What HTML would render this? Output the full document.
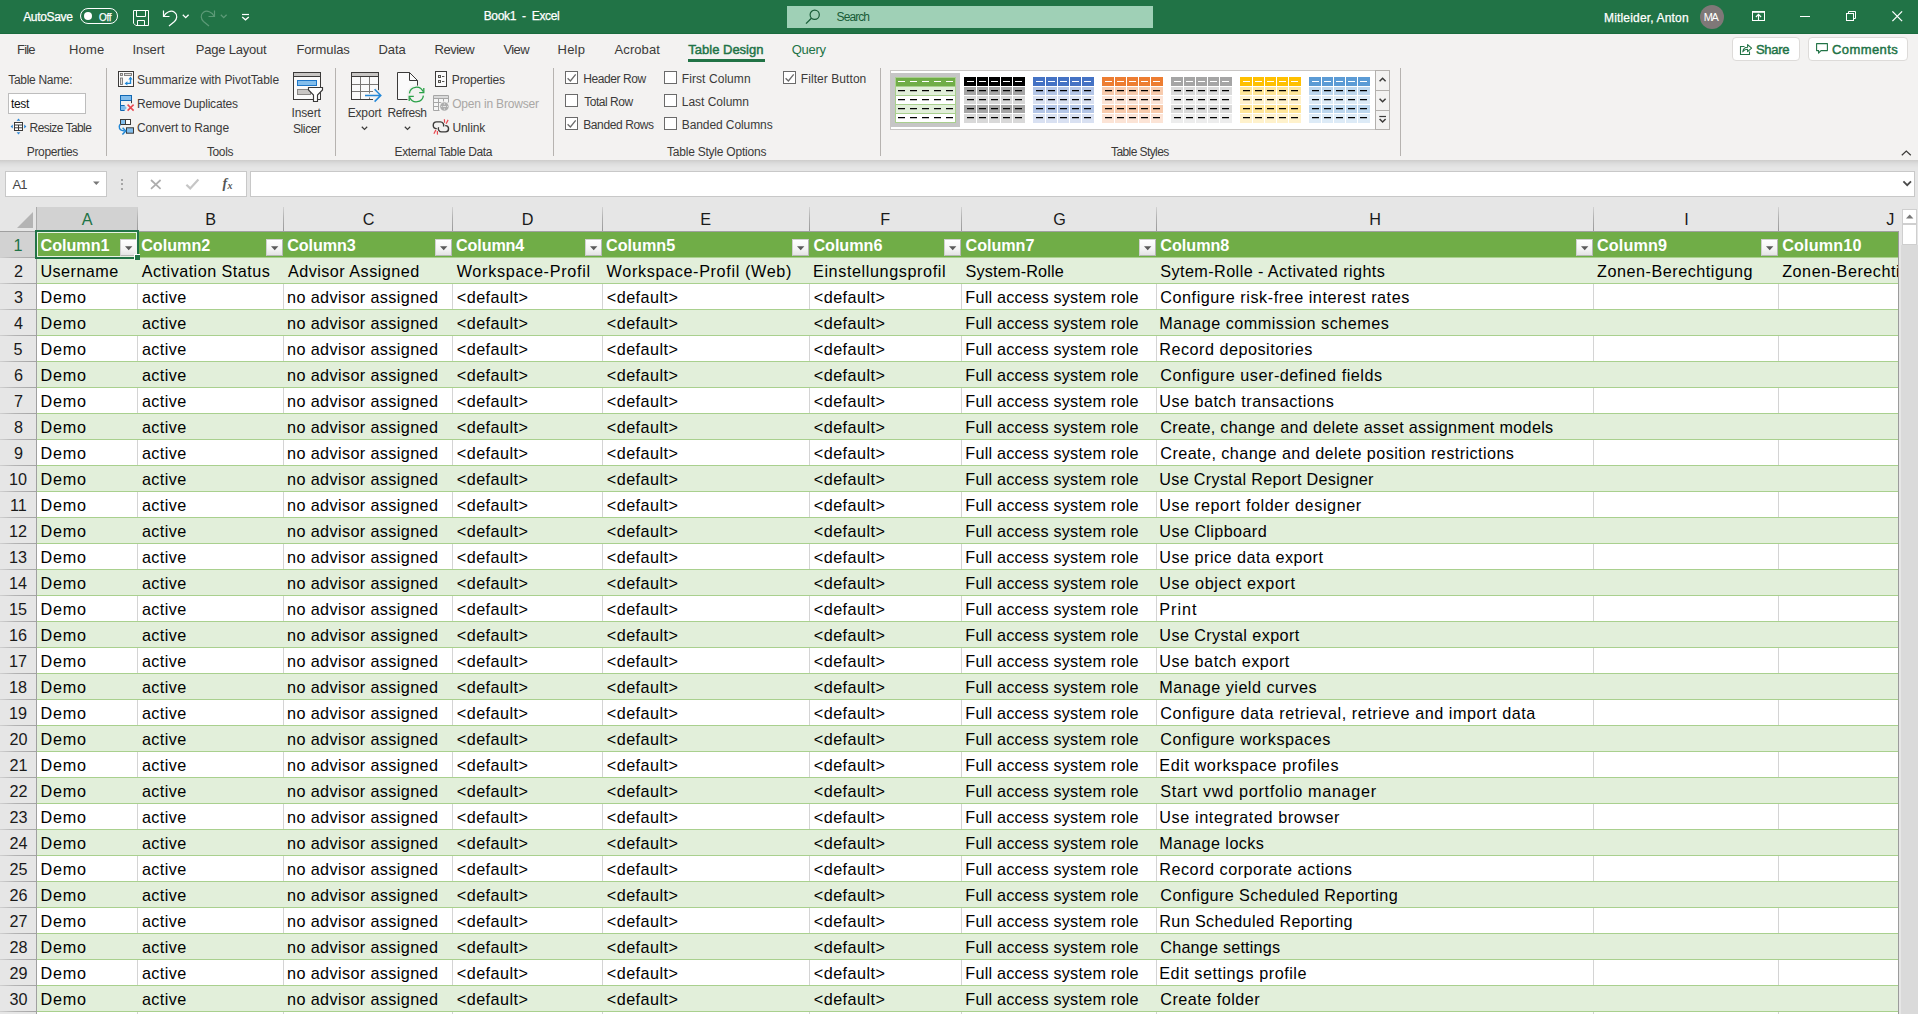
<!DOCTYPE html>
<html><head><meta charset="utf-8"><title>Book1 - Excel</title>
<style>
html,body{margin:0;padding:0;width:1918px;height:1014px;overflow:hidden;}
.root{position:absolute;left:0;top:0;width:1918px;height:1014px;overflow:hidden;}
body{width:1918px;height:1014px;overflow:hidden;background:#E6E6E6;position:relative;
font-family:"Liberation Sans", sans-serif;font-size:12px;color:#262626;}
.a{position:absolute;box-sizing:border-box;}
.t{position:absolute;white-space:nowrap;font-family:"Liberation Sans", sans-serif;}
svg{overflow:visible;}
</style></head>
<body>
<div class="root">
<div class="a" style="left:0px;top:0px;width:1918px;height:34px;background:#217346;"></div>
<div class="a" style="left:0px;top:33px;width:1918px;height:1px;background:#1A6B3E;"></div>
<div class="a" style="left:80px;top:8px;width:38px;height:16px;border:1px solid #fff;border-radius:8px;"></div>
<div class="a" style="left:84px;top:12px;width:8px;height:8px;background:#fff;border-radius:50%;"></div>
<svg class="a" style="left:133px;top:10px;" width="16" height="16" viewBox="0 0 16 16"><path d="M0.5 0.5 H15.5 V15.5 H2.8 L0.5 13.2 Z" fill="none" stroke="#fff" stroke-width="1"/><path d="M3.5 0.5 V6.5 H12.5 V0.5" fill="none" stroke="#fff" stroke-width="1"/><path d="M4.5 15.5 V10.5 H11.5 V15.5" fill="none" stroke="#fff" stroke-width="1"/></svg>
<svg class="a" style="left:162px;top:9px;" width="18" height="18" viewBox="0 0 18 18"><path d="M1.5 1.5 V7.5 H7.5" fill="none" stroke="#fff" stroke-width="1.2"/><path d="M1.8 7.2 C4 3 9 0.8 12.5 3.2 C16 5.8 15 10 12.5 12.5 L7 17" fill="none" stroke="#fff" stroke-width="1.2"/></svg>
<svg class="a" style="left:182px;top:14px;" width="8" height="5" viewBox="0 0 8 5"><path d="M0.8 0.8 L3.7 3.6 L6.6 0.8" fill="none" stroke="#fff" stroke-width="1.3"/></svg>
<svg class="a" style="left:200px;top:9px;" width="18" height="18" viewBox="0 0 18 18"><path d="M14.5 1.5 V7.5 H8.5" fill="none" stroke="#5C9A77" stroke-width="1.2"/><path d="M14.2 7.2 C12 3 7 0.8 3.5 3.2 C0 5.8 1 10 3.5 12.5 L9 17" fill="none" stroke="#5C9A77" stroke-width="1.2"/></svg>
<svg class="a" style="left:220px;top:14px;" width="8" height="5" viewBox="0 0 8 5"><path d="M0.8 0.8 L3.7 3.6 L6.6 0.8" fill="none" stroke="#5C9A77" stroke-width="1.3"/></svg>
<svg class="a" style="left:241px;top:13px;" width="9" height="8" viewBox="0 0 9 8"><path d="M1 1.5 H8" stroke="#fff" stroke-width="1.2"/><path d="M1.2 4 L4.5 6.8 L7.8 4" fill="none" stroke="#fff" stroke-width="1.3"/></svg>
<div class="a" style="left:787px;top:6px;width:366px;height:22px;background:#9FD0B6;"></div>
<svg class="a" style="left:805px;top:9px;" width="16" height="16" viewBox="0 0 16 16"><circle cx="9.7" cy="5.8" r="4.6" fill="none" stroke="#185C37" stroke-width="1.2"/><path d="M6.4 9.2 L1 14.6" stroke="#185C37" stroke-width="1.3"/></svg>
<div class="a" style="left:1700px;top:5px;width:24px;height:24px;background:#7F7878;border-radius:50%;"></div>
<svg class="a" style="left:1752px;top:11px;" width="15" height="12" viewBox="0 0 15 12"><rect x="0.5" y="0.5" width="12" height="9" fill="none" stroke="#fff" stroke-width="1"/><path d="M0.5 1.3 H12.5" stroke="#fff" stroke-width="1"/><path d="M6.5 9.5 V3.6 M3.9 6 L6.5 3.4 L9.1 6" fill="none" stroke="#fff" stroke-width="1.1"/></svg>
<div class="a" style="left:1800px;top:16px;width:10px;height:1px;background:#fff;"></div>
<svg class="a" style="left:1846px;top:10px;" width="12" height="12" viewBox="0 0 12 12"><rect x="0.5" y="3.5" width="7" height="7" fill="none" stroke="#fff" stroke-width="1"/><path d="M2.5 3.5 V1.5 H9.5 V8.5 H7.5" fill="none" stroke="#fff" stroke-width="1"/></svg>
<svg class="a" style="left:1892px;top:10.6px;" width="11" height="11" viewBox="0 0 11 11"><path d="M0.4 0.4 L10.1 10.1 M10.1 0.4 L0.4 10.1" stroke="#fff" stroke-width="1.3"/></svg>
<div class="a" style="left:0px;top:34px;width:1918px;height:126px;background:#F3F2F1;"></div>
<div class="a" style="left:0;top:160px;width:1918px;height:8px;background:linear-gradient(#CDCCCB,#D6D6D6 25%,#DEDEDE 50%,#E6E6E6);"></div>
<div class="a" style="left:688px;top:59px;width:77px;height:3px;background:#217346;"></div>
<div class="a" style="left:1732px;top:37px;width:68px;height:24px;background:#fff;border:1px solid #DDDBD9;border-radius:4px;"></div>
<div class="a" style="left:1808px;top:37px;width:100px;height:24px;background:#fff;border:1px solid #DDDBD9;border-radius:4px;"></div>
<svg class="a" style="left:1739px;top:43px;" width="14" height="13" viewBox="0 0 14 13"><path d="M5.5 3.5 H1.5 V11.5 H10.5 V8.5" fill="none" stroke="#217346" stroke-width="1.1"/><path d="M3.8 8.8 C4.2 5.6 6.2 4.2 8.6 4.2 V1.6 L12.6 5.2 L8.6 8.6 V6.2 C6.6 6.2 5 6.8 3.8 8.8 Z" fill="none" stroke="#217346" stroke-width="1.1" stroke-linejoin="round"/></svg>
<svg class="a" style="left:1816px;top:43px;" width="13" height="12" viewBox="0 0 13 12"><path d="M0.6 0.6 H11.4 V7.6 H5 L2.6 10.2 V7.6 H0.6 Z" fill="none" stroke="#217346" stroke-width="1.1" stroke-linejoin="round"/></svg>
<svg class="a" style="left:1901px;top:150px;" width="11" height="6" viewBox="0 0 11 6"><path d="M0.8 5.2 L5.3 1 L9.8 5.2" fill="none" stroke="#3B3A39" stroke-width="1.2"/></svg>
<div class="a" style="left:106px;top:68px;width:1px;height:88px;background:#B6B3B0;"></div>
<div class="a" style="left:335px;top:68px;width:1px;height:88px;background:#B6B3B0;"></div>
<div class="a" style="left:553px;top:68px;width:1px;height:88px;background:#B6B3B0;"></div>
<div class="a" style="left:880px;top:68px;width:1px;height:88px;background:#B6B3B0;"></div>
<div class="a" style="left:1400px;top:68px;width:1px;height:88px;background:#B6B3B0;"></div>
<div class="a" style="left:8px;top:93px;width:78px;height:21px;background:#fff;border:1px solid #BDBDBD;"></div>
<svg class="a" style="left:10px;top:118px;" width="17" height="17" viewBox="0 0 17 17"><rect x="4.5" y="4.5" width="8" height="8" fill="#fff" stroke="#3B3A39" stroke-width="1"/><path d="M4.5 7 H12.5 M4.5 9.8 H12.5 M8.5 7 V12.5" stroke="#3B3A39" stroke-width="1" fill="none"/><path d="M8.5 0.6 L10.4 2.8 H6.6 Z M8.5 16.4 L10.4 14.2 H6.6 Z M0.6 8.5 L2.8 6.6 V10.4 Z M16.4 8.5 L14.2 6.6 V10.4 Z" fill="#2B88D8"/></svg>
<svg class="a" style="left:118px;top:71px;" width="16" height="16" viewBox="0 0 16 16"><rect x="0.5" y="0.5" width="15" height="15" fill="#FAFAFA" stroke="#3B3A39" stroke-width="1"/><rect x="2.5" y="2.5" width="2" height="2" fill="#E1DFDD" stroke="#797775" stroke-width="0.9"/><rect x="6.5" y="2.5" width="7" height="2" fill="#E1DFDD" stroke="#797775" stroke-width="0.9"/><rect x="2.5" y="7" width="2" height="6.5" fill="#E1DFDD" stroke="#797775" stroke-width="0.9"/><path d="M12.5 8 V12.4 H8.8" fill="none" stroke="#1F87D6" stroke-width="1.4"/><path d="M12.5 5.6 L14.6 8.4 H10.4 Z M6.6 12.4 L9.4 10.3 V14.5 Z" fill="#1F87D6"/></svg>
<svg class="a" style="left:119px;top:95px;" width="16" height="17" viewBox="0 0 16 17"><rect x="1.5" y="0.5" width="11" height="5" fill="#83BEEC" stroke="#1268B3" stroke-width="1"/><path d="M12.5 5.5 V8.2" stroke="#3B3A39" stroke-width="1" fill="none"/><path d="M2 10.5 H5.6 L7.8 12.9 L5.6 15.3 H2 Z" fill="#83BEEC" stroke="none"/><path d="M1.5 5.5 V15.5 H5.6 M1.5 10.5 H5.6" stroke="#1268B3" stroke-width="1" fill="none"/><path d="M8.6 9.6 L14.6 15.6 M14.6 9.6 L8.6 15.6" stroke="#E8484F" stroke-width="1.5" fill="none"/></svg>
<svg class="a" style="left:118px;top:119px;" width="17" height="17" viewBox="0 0 17 17"><rect x="2.5" y="0.5" width="5" height="5" fill="#83BEEC" stroke="#3B3A39" stroke-width="1"/><rect x="7.5" y="0.5" width="5" height="5" fill="#fff" stroke="#3B3A39" stroke-width="1"/><rect x="8.5" y="8.8" width="7" height="5.4" fill="#83BEEC" stroke="#3B3A39" stroke-width="1"/><path d="M2.2 5.2 C0 8 1.2 11.6 6.6 12" fill="none" stroke="#1F87D6" stroke-width="1.5"/><path d="M4.6 8.8 L7.8 12 L4.4 15.6" fill="none" stroke="#1F87D6" stroke-width="1.5"/></svg>
<svg class="a" style="left:284px;top:66px;" width="44" height="40" viewBox="0 0 44 40"><rect x="9" y="6" width="28" height="27.5" fill="#FAFAFA"/><rect x="9" y="6.5" width="28" height="3.5" fill="#C8C6C4"/><path d="M9.5 10.5 H36.5" stroke="#3B3A39" stroke-width="1"/><rect x="9.5" y="6.5" width="27" height="27" fill="none" stroke="#3B3A39" stroke-width="1"/><rect x="13.5" y="14.5" width="19" height="5" fill="#83BEEC" stroke="#1E77C8" stroke-width="1"/><rect x="13.5" y="23.5" width="13" height="5" fill="#C8C6C4" stroke="#8A8886" stroke-width="1"/><path d="M24.5 21.5 H38.5 V24 L33.5 29 V35.5 H29.5 V29 L24.5 24 Z" fill="#fff" stroke="#3B3A39" stroke-width="1.15" stroke-linejoin="miter"/></svg>
<svg class="a" style="left:344px;top:68px;" width="40" height="36" viewBox="0 0 40 36"><rect x="8" y="5" width="26" height="26.5" fill="#FAFAFA"/><rect x="8" y="5" width="26" height="3" fill="#C8C6C4"/><path d="M16.5 8.5 V31.5 M25.5 8.5 V31.5 M7.5 16.5 H34.5 M7.5 23.5 H34.5" stroke="#7A7876" stroke-width="1" fill="none"/><path d="M7.5 8.5 H34.5" stroke="#3B3A39" stroke-width="1"/><rect x="7.5" y="4.5" width="27" height="27" fill="none" stroke="#3B3A39" stroke-width="1"/><rect x="29" y="22.4" width="8" height="10.5" fill="#F3F2F1"/><path d="M21 27.4 H36 M30.6 21.2 L36.8 27.4 L30.6 33.6" fill="none" stroke="#F3F2F1" stroke-width="4"/><path d="M21 27.4 H36.4 M30.6 21.2 L36.8 27.4 L30.6 33.6" fill="none" stroke="#2488D8" stroke-width="1.5"/></svg>
<svg class="a" style="left:361px;top:126px;" width="8" height="5" viewBox="0 0 8 5"><path d="M0.8 0.8 L3.5 3.4 L6.2 0.8" fill="none" stroke="#3B3A39" stroke-width="1.2"/></svg>
<svg class="a" style="left:344px;top:68px;" width="84" height="36" viewBox="0 0 84 36"><path d="M53.5 31.5 V4.5 H65.5 L73.5 12.5 V31.5 Z" fill="#FAFAFA" stroke="none"/><circle cx="72.4" cy="26.5" r="9.6" fill="#F3F2F1"/><path d="M63.5 31.5 H53.5 V4.5 H65.5 L73.5 12.5 V17.6" fill="none" stroke="#3B3A39" stroke-width="1"/><path d="M65.5 4.5 V12.5 H73.5" fill="none" stroke="#3B3A39" stroke-width="1"/><path d="M65.4 25.4 A7.1 7.1 0 0 1 79.0 23.6" fill="none" stroke="#2AA148" stroke-width="1.3"/><path d="M79.4 27.6 A7.1 7.1 0 0 1 65.8 29.4" fill="none" stroke="#2AA148" stroke-width="1.3"/><path d="M79.8 20 V24.7 H75.2" fill="none" stroke="#2AA148" stroke-width="1.3"/><path d="M65.2 33 V28.3 H69.8" fill="none" stroke="#2AA148" stroke-width="1.3"/></svg>
<svg class="a" style="left:404px;top:126px;" width="8" height="5" viewBox="0 0 8 5"><path d="M0.8 0.8 L3.5 3.4 L6.2 0.8" fill="none" stroke="#3B3A39" stroke-width="1.2"/></svg>
<svg class="a" style="left:434px;top:71px;" width="14" height="17" viewBox="0 0 14 17"><rect x="1.5" y="0.5" width="11" height="15" fill="#FAFAFA" stroke="#3B3A39" stroke-width="1"/><rect x="4.5" y="4.5" width="2" height="2" fill="#E8E8E8" stroke="#55534F" stroke-width="1"/><rect x="4.5" y="9.5" width="2" height="2" fill="#E8E8E8" stroke="#55534F" stroke-width="1"/><path d="M8 5.5 H10.4 M8 10.5 H10.4" stroke="#55534F" stroke-width="1"/></svg>
<svg class="a" style="left:430px;top:92px;" width="22" height="22" viewBox="0 0 22 22"><rect x="3.5" y="3.5" width="15" height="15" fill="#F6F6F6" stroke="none"/><path d="M18.5 10 V3.5 H3.5 V18.5 H9.5" fill="none" stroke="#A6A6A6" stroke-width="1"/><rect x="4" y="4" width="14" height="2.4" fill="#DADADA"/><path d="M3.5 6.5 H18.5 M3.5 10.5 H18.5 M3.5 14.5 H12 M8.5 6.5 V18.5 M13.5 6.5 V10.5" stroke="#A6A6A6" stroke-width="1" fill="none"/><circle cx="14.4" cy="14.5" r="5.3" fill="#F3F2F1"/><circle cx="14.4" cy="14.5" r="4.3" fill="#ADADAD"/><path d="M12.8 14.5 H16 M11 14.5 H11.8 M17 14.5 H17.8 M14.4 11.4 V12.6 M14.4 16.4 V17.6" stroke="#EDEDED" stroke-width="0.9"/></svg>
<svg class="a" style="left:430px;top:92px;" width="22" height="46" viewBox="0 0 22 46"><path d="M6.8 36.6 H6.6 A3.35 3.35 0 0 1 6.6 29.9 H10.4 A3.3 3.3 0 0 1 13.5 34.4" fill="none" stroke="#3B3A39" stroke-width="1.4"/><path d="M15.2 33.6 H15.4 A3.15 3.15 0 0 1 15.4 39.9 H11.6 A3.3 3.3 0 0 1 8.6 35.2" fill="none" stroke="#3B3A39" stroke-width="1.4"/><path d="M14.4 27.2 L14.6 30.8 M18.1 27.9 L16.1 31.7 M5.9 37.9 L3.9 41.7 M7.3 39 L7.5 42.6" stroke="#E8484F" stroke-width="1.2"/></svg>
<div class="a" style="left:565px;top:71px;width:13px;height:13px;background:#fff;border:1px solid #6A6A6A;"></div>
<svg class="a" style="left:565px;top:71px;" width="13" height="13" viewBox="0 0 13 13"><path d="M2.6 7.3 L5.4 10 L10.7 3.3" fill="none" stroke="#6A6A6A" stroke-width="1.3"/></svg>
<div class="a" style="left:565px;top:94px;width:13px;height:13px;background:#fff;border:1px solid #6A6A6A;"></div>
<div class="a" style="left:565px;top:117px;width:13px;height:13px;background:#fff;border:1px solid #6A6A6A;"></div>
<svg class="a" style="left:565px;top:117px;" width="13" height="13" viewBox="0 0 13 13"><path d="M2.6 7.3 L5.4 10 L10.7 3.3" fill="none" stroke="#6A6A6A" stroke-width="1.3"/></svg>
<div class="a" style="left:664px;top:71px;width:13px;height:13px;background:#fff;border:1px solid #6A6A6A;"></div>
<div class="a" style="left:664px;top:94px;width:13px;height:13px;background:#fff;border:1px solid #6A6A6A;"></div>
<div class="a" style="left:664px;top:117px;width:13px;height:13px;background:#fff;border:1px solid #6A6A6A;"></div>
<div class="a" style="left:783px;top:71px;width:13px;height:13px;background:#fff;border:1px solid #6A6A6A;"></div>
<svg class="a" style="left:783px;top:71px;" width="13" height="13" viewBox="0 0 13 13"><path d="M2.6 7.3 L5.4 10 L10.7 3.3" fill="none" stroke="#6A6A6A" stroke-width="1.3"/></svg>
<div class="a" style="left:890px;top:70px;width:500px;height:60px;background:#fff;border:1px solid #C8C6C4;"></div>
<div class="a" style="left:891px;top:73px;width:69px;height:54px;background:#C6C6C6;"></div>
<svg class="a" style="left:895px;top:77px;shape-rendering:crispEdges;" width="61" height="46" viewBox="0 0 61 46"><rect x="0" y="0" width="61" height="46" fill="#fff"/><rect x="0" y="0" width="61" height="9" fill="#70AD47"/><rect x="0" y="10" width="61" height="8" fill="#E2EFDA"/><rect x="0" y="19" width="61" height="8" fill="#FFFFFF"/><rect x="0" y="28" width="61" height="8" fill="#E2EFDA"/><rect x="0" y="37" width="61" height="9" fill="#FFFFFF"/><rect x="0" y="9" width="61" height="1" fill="#A9D08E"/><rect x="0" y="18" width="61" height="1" fill="#A9D08E"/><rect x="0" y="27" width="61" height="1" fill="#A9D08E"/><rect x="0" y="36" width="61" height="1" fill="#A9D08E"/><rect x="0" y="0" width="61" height="9" fill="#70AD47"/><rect x="0.5" y="0.5" width="60" height="45" fill="none" stroke="#A9D08E" stroke-width="1"/><rect x="3" y="4" width="7" height="1" fill="#fff"/><rect x="15" y="4" width="7" height="1" fill="#fff"/><rect x="27" y="4" width="7" height="1" fill="#fff"/><rect x="39" y="4" width="7" height="1" fill="#fff"/><rect x="51" y="4" width="7" height="1" fill="#fff"/><rect x="3" y="13" width="7" height="1" fill="#000"/><rect x="3" y="14" width="7" height="1" fill="#000" opacity="0.25"/><rect x="15" y="13" width="7" height="1" fill="#000"/><rect x="15" y="14" width="7" height="1" fill="#000" opacity="0.25"/><rect x="27" y="13" width="7" height="1" fill="#000"/><rect x="27" y="14" width="7" height="1" fill="#000" opacity="0.25"/><rect x="39" y="13" width="7" height="1" fill="#000"/><rect x="39" y="14" width="7" height="1" fill="#000" opacity="0.25"/><rect x="51" y="13" width="7" height="1" fill="#000"/><rect x="51" y="14" width="7" height="1" fill="#000" opacity="0.25"/><rect x="3" y="22" width="7" height="1" fill="#000"/><rect x="3" y="23" width="7" height="1" fill="#000" opacity="0.25"/><rect x="15" y="22" width="7" height="1" fill="#000"/><rect x="15" y="23" width="7" height="1" fill="#000" opacity="0.25"/><rect x="27" y="22" width="7" height="1" fill="#000"/><rect x="27" y="23" width="7" height="1" fill="#000" opacity="0.25"/><rect x="39" y="22" width="7" height="1" fill="#000"/><rect x="39" y="23" width="7" height="1" fill="#000" opacity="0.25"/><rect x="51" y="22" width="7" height="1" fill="#000"/><rect x="51" y="23" width="7" height="1" fill="#000" opacity="0.25"/><rect x="3" y="31" width="7" height="1" fill="#000"/><rect x="3" y="32" width="7" height="1" fill="#000" opacity="0.25"/><rect x="15" y="31" width="7" height="1" fill="#000"/><rect x="15" y="32" width="7" height="1" fill="#000" opacity="0.25"/><rect x="27" y="31" width="7" height="1" fill="#000"/><rect x="27" y="32" width="7" height="1" fill="#000" opacity="0.25"/><rect x="39" y="31" width="7" height="1" fill="#000"/><rect x="39" y="32" width="7" height="1" fill="#000" opacity="0.25"/><rect x="51" y="31" width="7" height="1" fill="#000"/><rect x="51" y="32" width="7" height="1" fill="#000" opacity="0.25"/><rect x="3" y="40" width="7" height="1" fill="#000"/><rect x="3" y="41" width="7" height="1" fill="#000" opacity="0.25"/><rect x="15" y="40" width="7" height="1" fill="#000"/><rect x="15" y="41" width="7" height="1" fill="#000" opacity="0.25"/><rect x="27" y="40" width="7" height="1" fill="#000"/><rect x="27" y="41" width="7" height="1" fill="#000" opacity="0.25"/><rect x="39" y="40" width="7" height="1" fill="#000"/><rect x="39" y="41" width="7" height="1" fill="#000" opacity="0.25"/><rect x="51" y="40" width="7" height="1" fill="#000"/><rect x="51" y="41" width="7" height="1" fill="#000" opacity="0.25"/></svg>
<svg class="a" style="left:964px;top:77px;shape-rendering:crispEdges;" width="61" height="46" viewBox="0 0 61 46"><rect x="0" y="0" width="12" height="9" fill="#000000"/><rect x="13" y="0" width="11" height="9" fill="#000000"/><rect x="25" y="0" width="11" height="9" fill="#000000"/><rect x="37" y="0" width="11" height="9" fill="#000000"/><rect x="49" y="0" width="12" height="9" fill="#000000"/><rect x="0" y="10" width="12" height="8" fill="#A6A6A6"/><rect x="13" y="10" width="11" height="8" fill="#A6A6A6"/><rect x="25" y="10" width="11" height="8" fill="#A6A6A6"/><rect x="37" y="10" width="11" height="8" fill="#A6A6A6"/><rect x="49" y="10" width="12" height="8" fill="#A6A6A6"/><rect x="0" y="19" width="12" height="8" fill="#D9D9D9"/><rect x="13" y="19" width="11" height="8" fill="#D9D9D9"/><rect x="25" y="19" width="11" height="8" fill="#D9D9D9"/><rect x="37" y="19" width="11" height="8" fill="#D9D9D9"/><rect x="49" y="19" width="12" height="8" fill="#D9D9D9"/><rect x="0" y="28" width="12" height="8" fill="#A6A6A6"/><rect x="13" y="28" width="11" height="8" fill="#A6A6A6"/><rect x="25" y="28" width="11" height="8" fill="#A6A6A6"/><rect x="37" y="28" width="11" height="8" fill="#A6A6A6"/><rect x="49" y="28" width="12" height="8" fill="#A6A6A6"/><rect x="0" y="37" width="12" height="9" fill="#D9D9D9"/><rect x="13" y="37" width="11" height="9" fill="#D9D9D9"/><rect x="25" y="37" width="11" height="9" fill="#D9D9D9"/><rect x="37" y="37" width="11" height="9" fill="#D9D9D9"/><rect x="49" y="37" width="12" height="9" fill="#D9D9D9"/><rect x="3" y="4" width="7" height="1" fill="#fff"/><rect x="15" y="4" width="7" height="1" fill="#fff"/><rect x="27" y="4" width="7" height="1" fill="#fff"/><rect x="39" y="4" width="7" height="1" fill="#fff"/><rect x="51" y="4" width="7" height="1" fill="#fff"/><rect x="3" y="13" width="7" height="1" fill="#000"/><rect x="3" y="14" width="7" height="1" fill="#000" opacity="0.25"/><rect x="15" y="13" width="7" height="1" fill="#000"/><rect x="15" y="14" width="7" height="1" fill="#000" opacity="0.25"/><rect x="27" y="13" width="7" height="1" fill="#000"/><rect x="27" y="14" width="7" height="1" fill="#000" opacity="0.25"/><rect x="39" y="13" width="7" height="1" fill="#000"/><rect x="39" y="14" width="7" height="1" fill="#000" opacity="0.25"/><rect x="51" y="13" width="7" height="1" fill="#000"/><rect x="51" y="14" width="7" height="1" fill="#000" opacity="0.25"/><rect x="3" y="22" width="7" height="1" fill="#000"/><rect x="3" y="23" width="7" height="1" fill="#000" opacity="0.25"/><rect x="15" y="22" width="7" height="1" fill="#000"/><rect x="15" y="23" width="7" height="1" fill="#000" opacity="0.25"/><rect x="27" y="22" width="7" height="1" fill="#000"/><rect x="27" y="23" width="7" height="1" fill="#000" opacity="0.25"/><rect x="39" y="22" width="7" height="1" fill="#000"/><rect x="39" y="23" width="7" height="1" fill="#000" opacity="0.25"/><rect x="51" y="22" width="7" height="1" fill="#000"/><rect x="51" y="23" width="7" height="1" fill="#000" opacity="0.25"/><rect x="3" y="31" width="7" height="1" fill="#000"/><rect x="3" y="32" width="7" height="1" fill="#000" opacity="0.25"/><rect x="15" y="31" width="7" height="1" fill="#000"/><rect x="15" y="32" width="7" height="1" fill="#000" opacity="0.25"/><rect x="27" y="31" width="7" height="1" fill="#000"/><rect x="27" y="32" width="7" height="1" fill="#000" opacity="0.25"/><rect x="39" y="31" width="7" height="1" fill="#000"/><rect x="39" y="32" width="7" height="1" fill="#000" opacity="0.25"/><rect x="51" y="31" width="7" height="1" fill="#000"/><rect x="51" y="32" width="7" height="1" fill="#000" opacity="0.25"/><rect x="3" y="40" width="7" height="1" fill="#000"/><rect x="3" y="41" width="7" height="1" fill="#000" opacity="0.25"/><rect x="15" y="40" width="7" height="1" fill="#000"/><rect x="15" y="41" width="7" height="1" fill="#000" opacity="0.25"/><rect x="27" y="40" width="7" height="1" fill="#000"/><rect x="27" y="41" width="7" height="1" fill="#000" opacity="0.25"/><rect x="39" y="40" width="7" height="1" fill="#000"/><rect x="39" y="41" width="7" height="1" fill="#000" opacity="0.25"/><rect x="51" y="40" width="7" height="1" fill="#000"/><rect x="51" y="41" width="7" height="1" fill="#000" opacity="0.25"/></svg>
<svg class="a" style="left:1033px;top:77px;shape-rendering:crispEdges;" width="61" height="46" viewBox="0 0 61 46"><rect x="0" y="0" width="12" height="9" fill="#4472C4"/><rect x="13" y="0" width="11" height="9" fill="#4472C4"/><rect x="25" y="0" width="11" height="9" fill="#4472C4"/><rect x="37" y="0" width="11" height="9" fill="#4472C4"/><rect x="49" y="0" width="12" height="9" fill="#4472C4"/><rect x="0" y="10" width="12" height="8" fill="#B4C6E7"/><rect x="13" y="10" width="11" height="8" fill="#B4C6E7"/><rect x="25" y="10" width="11" height="8" fill="#B4C6E7"/><rect x="37" y="10" width="11" height="8" fill="#B4C6E7"/><rect x="49" y="10" width="12" height="8" fill="#B4C6E7"/><rect x="0" y="19" width="12" height="8" fill="#D9E1F2"/><rect x="13" y="19" width="11" height="8" fill="#D9E1F2"/><rect x="25" y="19" width="11" height="8" fill="#D9E1F2"/><rect x="37" y="19" width="11" height="8" fill="#D9E1F2"/><rect x="49" y="19" width="12" height="8" fill="#D9E1F2"/><rect x="0" y="28" width="12" height="8" fill="#B4C6E7"/><rect x="13" y="28" width="11" height="8" fill="#B4C6E7"/><rect x="25" y="28" width="11" height="8" fill="#B4C6E7"/><rect x="37" y="28" width="11" height="8" fill="#B4C6E7"/><rect x="49" y="28" width="12" height="8" fill="#B4C6E7"/><rect x="0" y="37" width="12" height="9" fill="#D9E1F2"/><rect x="13" y="37" width="11" height="9" fill="#D9E1F2"/><rect x="25" y="37" width="11" height="9" fill="#D9E1F2"/><rect x="37" y="37" width="11" height="9" fill="#D9E1F2"/><rect x="49" y="37" width="12" height="9" fill="#D9E1F2"/><rect x="3" y="4" width="7" height="1" fill="#fff"/><rect x="15" y="4" width="7" height="1" fill="#fff"/><rect x="27" y="4" width="7" height="1" fill="#fff"/><rect x="39" y="4" width="7" height="1" fill="#fff"/><rect x="51" y="4" width="7" height="1" fill="#fff"/><rect x="3" y="13" width="7" height="1" fill="#000"/><rect x="3" y="14" width="7" height="1" fill="#000" opacity="0.25"/><rect x="15" y="13" width="7" height="1" fill="#000"/><rect x="15" y="14" width="7" height="1" fill="#000" opacity="0.25"/><rect x="27" y="13" width="7" height="1" fill="#000"/><rect x="27" y="14" width="7" height="1" fill="#000" opacity="0.25"/><rect x="39" y="13" width="7" height="1" fill="#000"/><rect x="39" y="14" width="7" height="1" fill="#000" opacity="0.25"/><rect x="51" y="13" width="7" height="1" fill="#000"/><rect x="51" y="14" width="7" height="1" fill="#000" opacity="0.25"/><rect x="3" y="22" width="7" height="1" fill="#000"/><rect x="3" y="23" width="7" height="1" fill="#000" opacity="0.25"/><rect x="15" y="22" width="7" height="1" fill="#000"/><rect x="15" y="23" width="7" height="1" fill="#000" opacity="0.25"/><rect x="27" y="22" width="7" height="1" fill="#000"/><rect x="27" y="23" width="7" height="1" fill="#000" opacity="0.25"/><rect x="39" y="22" width="7" height="1" fill="#000"/><rect x="39" y="23" width="7" height="1" fill="#000" opacity="0.25"/><rect x="51" y="22" width="7" height="1" fill="#000"/><rect x="51" y="23" width="7" height="1" fill="#000" opacity="0.25"/><rect x="3" y="31" width="7" height="1" fill="#000"/><rect x="3" y="32" width="7" height="1" fill="#000" opacity="0.25"/><rect x="15" y="31" width="7" height="1" fill="#000"/><rect x="15" y="32" width="7" height="1" fill="#000" opacity="0.25"/><rect x="27" y="31" width="7" height="1" fill="#000"/><rect x="27" y="32" width="7" height="1" fill="#000" opacity="0.25"/><rect x="39" y="31" width="7" height="1" fill="#000"/><rect x="39" y="32" width="7" height="1" fill="#000" opacity="0.25"/><rect x="51" y="31" width="7" height="1" fill="#000"/><rect x="51" y="32" width="7" height="1" fill="#000" opacity="0.25"/><rect x="3" y="40" width="7" height="1" fill="#000"/><rect x="3" y="41" width="7" height="1" fill="#000" opacity="0.25"/><rect x="15" y="40" width="7" height="1" fill="#000"/><rect x="15" y="41" width="7" height="1" fill="#000" opacity="0.25"/><rect x="27" y="40" width="7" height="1" fill="#000"/><rect x="27" y="41" width="7" height="1" fill="#000" opacity="0.25"/><rect x="39" y="40" width="7" height="1" fill="#000"/><rect x="39" y="41" width="7" height="1" fill="#000" opacity="0.25"/><rect x="51" y="40" width="7" height="1" fill="#000"/><rect x="51" y="41" width="7" height="1" fill="#000" opacity="0.25"/></svg>
<svg class="a" style="left:1102px;top:77px;shape-rendering:crispEdges;" width="61" height="46" viewBox="0 0 61 46"><rect x="0" y="0" width="12" height="9" fill="#ED7D31"/><rect x="13" y="0" width="11" height="9" fill="#ED7D31"/><rect x="25" y="0" width="11" height="9" fill="#ED7D31"/><rect x="37" y="0" width="11" height="9" fill="#ED7D31"/><rect x="49" y="0" width="12" height="9" fill="#ED7D31"/><rect x="0" y="10" width="12" height="8" fill="#F8CBAD"/><rect x="13" y="10" width="11" height="8" fill="#F8CBAD"/><rect x="25" y="10" width="11" height="8" fill="#F8CBAD"/><rect x="37" y="10" width="11" height="8" fill="#F8CBAD"/><rect x="49" y="10" width="12" height="8" fill="#F8CBAD"/><rect x="0" y="19" width="12" height="8" fill="#FCE4D6"/><rect x="13" y="19" width="11" height="8" fill="#FCE4D6"/><rect x="25" y="19" width="11" height="8" fill="#FCE4D6"/><rect x="37" y="19" width="11" height="8" fill="#FCE4D6"/><rect x="49" y="19" width="12" height="8" fill="#FCE4D6"/><rect x="0" y="28" width="12" height="8" fill="#F8CBAD"/><rect x="13" y="28" width="11" height="8" fill="#F8CBAD"/><rect x="25" y="28" width="11" height="8" fill="#F8CBAD"/><rect x="37" y="28" width="11" height="8" fill="#F8CBAD"/><rect x="49" y="28" width="12" height="8" fill="#F8CBAD"/><rect x="0" y="37" width="12" height="9" fill="#FCE4D6"/><rect x="13" y="37" width="11" height="9" fill="#FCE4D6"/><rect x="25" y="37" width="11" height="9" fill="#FCE4D6"/><rect x="37" y="37" width="11" height="9" fill="#FCE4D6"/><rect x="49" y="37" width="12" height="9" fill="#FCE4D6"/><rect x="3" y="4" width="7" height="1" fill="#fff"/><rect x="15" y="4" width="7" height="1" fill="#fff"/><rect x="27" y="4" width="7" height="1" fill="#fff"/><rect x="39" y="4" width="7" height="1" fill="#fff"/><rect x="51" y="4" width="7" height="1" fill="#fff"/><rect x="3" y="13" width="7" height="1" fill="#000"/><rect x="3" y="14" width="7" height="1" fill="#000" opacity="0.25"/><rect x="15" y="13" width="7" height="1" fill="#000"/><rect x="15" y="14" width="7" height="1" fill="#000" opacity="0.25"/><rect x="27" y="13" width="7" height="1" fill="#000"/><rect x="27" y="14" width="7" height="1" fill="#000" opacity="0.25"/><rect x="39" y="13" width="7" height="1" fill="#000"/><rect x="39" y="14" width="7" height="1" fill="#000" opacity="0.25"/><rect x="51" y="13" width="7" height="1" fill="#000"/><rect x="51" y="14" width="7" height="1" fill="#000" opacity="0.25"/><rect x="3" y="22" width="7" height="1" fill="#000"/><rect x="3" y="23" width="7" height="1" fill="#000" opacity="0.25"/><rect x="15" y="22" width="7" height="1" fill="#000"/><rect x="15" y="23" width="7" height="1" fill="#000" opacity="0.25"/><rect x="27" y="22" width="7" height="1" fill="#000"/><rect x="27" y="23" width="7" height="1" fill="#000" opacity="0.25"/><rect x="39" y="22" width="7" height="1" fill="#000"/><rect x="39" y="23" width="7" height="1" fill="#000" opacity="0.25"/><rect x="51" y="22" width="7" height="1" fill="#000"/><rect x="51" y="23" width="7" height="1" fill="#000" opacity="0.25"/><rect x="3" y="31" width="7" height="1" fill="#000"/><rect x="3" y="32" width="7" height="1" fill="#000" opacity="0.25"/><rect x="15" y="31" width="7" height="1" fill="#000"/><rect x="15" y="32" width="7" height="1" fill="#000" opacity="0.25"/><rect x="27" y="31" width="7" height="1" fill="#000"/><rect x="27" y="32" width="7" height="1" fill="#000" opacity="0.25"/><rect x="39" y="31" width="7" height="1" fill="#000"/><rect x="39" y="32" width="7" height="1" fill="#000" opacity="0.25"/><rect x="51" y="31" width="7" height="1" fill="#000"/><rect x="51" y="32" width="7" height="1" fill="#000" opacity="0.25"/><rect x="3" y="40" width="7" height="1" fill="#000"/><rect x="3" y="41" width="7" height="1" fill="#000" opacity="0.25"/><rect x="15" y="40" width="7" height="1" fill="#000"/><rect x="15" y="41" width="7" height="1" fill="#000" opacity="0.25"/><rect x="27" y="40" width="7" height="1" fill="#000"/><rect x="27" y="41" width="7" height="1" fill="#000" opacity="0.25"/><rect x="39" y="40" width="7" height="1" fill="#000"/><rect x="39" y="41" width="7" height="1" fill="#000" opacity="0.25"/><rect x="51" y="40" width="7" height="1" fill="#000"/><rect x="51" y="41" width="7" height="1" fill="#000" opacity="0.25"/></svg>
<svg class="a" style="left:1171px;top:77px;shape-rendering:crispEdges;" width="61" height="46" viewBox="0 0 61 46"><rect x="0" y="0" width="12" height="9" fill="#A5A5A5"/><rect x="13" y="0" width="11" height="9" fill="#A5A5A5"/><rect x="25" y="0" width="11" height="9" fill="#A5A5A5"/><rect x="37" y="0" width="11" height="9" fill="#A5A5A5"/><rect x="49" y="0" width="12" height="9" fill="#A5A5A5"/><rect x="0" y="10" width="12" height="8" fill="#DBDBDB"/><rect x="13" y="10" width="11" height="8" fill="#DBDBDB"/><rect x="25" y="10" width="11" height="8" fill="#DBDBDB"/><rect x="37" y="10" width="11" height="8" fill="#DBDBDB"/><rect x="49" y="10" width="12" height="8" fill="#DBDBDB"/><rect x="0" y="19" width="12" height="8" fill="#EDEDED"/><rect x="13" y="19" width="11" height="8" fill="#EDEDED"/><rect x="25" y="19" width="11" height="8" fill="#EDEDED"/><rect x="37" y="19" width="11" height="8" fill="#EDEDED"/><rect x="49" y="19" width="12" height="8" fill="#EDEDED"/><rect x="0" y="28" width="12" height="8" fill="#DBDBDB"/><rect x="13" y="28" width="11" height="8" fill="#DBDBDB"/><rect x="25" y="28" width="11" height="8" fill="#DBDBDB"/><rect x="37" y="28" width="11" height="8" fill="#DBDBDB"/><rect x="49" y="28" width="12" height="8" fill="#DBDBDB"/><rect x="0" y="37" width="12" height="9" fill="#EDEDED"/><rect x="13" y="37" width="11" height="9" fill="#EDEDED"/><rect x="25" y="37" width="11" height="9" fill="#EDEDED"/><rect x="37" y="37" width="11" height="9" fill="#EDEDED"/><rect x="49" y="37" width="12" height="9" fill="#EDEDED"/><rect x="3" y="4" width="7" height="1" fill="#fff"/><rect x="15" y="4" width="7" height="1" fill="#fff"/><rect x="27" y="4" width="7" height="1" fill="#fff"/><rect x="39" y="4" width="7" height="1" fill="#fff"/><rect x="51" y="4" width="7" height="1" fill="#fff"/><rect x="3" y="13" width="7" height="1" fill="#000"/><rect x="3" y="14" width="7" height="1" fill="#000" opacity="0.25"/><rect x="15" y="13" width="7" height="1" fill="#000"/><rect x="15" y="14" width="7" height="1" fill="#000" opacity="0.25"/><rect x="27" y="13" width="7" height="1" fill="#000"/><rect x="27" y="14" width="7" height="1" fill="#000" opacity="0.25"/><rect x="39" y="13" width="7" height="1" fill="#000"/><rect x="39" y="14" width="7" height="1" fill="#000" opacity="0.25"/><rect x="51" y="13" width="7" height="1" fill="#000"/><rect x="51" y="14" width="7" height="1" fill="#000" opacity="0.25"/><rect x="3" y="22" width="7" height="1" fill="#000"/><rect x="3" y="23" width="7" height="1" fill="#000" opacity="0.25"/><rect x="15" y="22" width="7" height="1" fill="#000"/><rect x="15" y="23" width="7" height="1" fill="#000" opacity="0.25"/><rect x="27" y="22" width="7" height="1" fill="#000"/><rect x="27" y="23" width="7" height="1" fill="#000" opacity="0.25"/><rect x="39" y="22" width="7" height="1" fill="#000"/><rect x="39" y="23" width="7" height="1" fill="#000" opacity="0.25"/><rect x="51" y="22" width="7" height="1" fill="#000"/><rect x="51" y="23" width="7" height="1" fill="#000" opacity="0.25"/><rect x="3" y="31" width="7" height="1" fill="#000"/><rect x="3" y="32" width="7" height="1" fill="#000" opacity="0.25"/><rect x="15" y="31" width="7" height="1" fill="#000"/><rect x="15" y="32" width="7" height="1" fill="#000" opacity="0.25"/><rect x="27" y="31" width="7" height="1" fill="#000"/><rect x="27" y="32" width="7" height="1" fill="#000" opacity="0.25"/><rect x="39" y="31" width="7" height="1" fill="#000"/><rect x="39" y="32" width="7" height="1" fill="#000" opacity="0.25"/><rect x="51" y="31" width="7" height="1" fill="#000"/><rect x="51" y="32" width="7" height="1" fill="#000" opacity="0.25"/><rect x="3" y="40" width="7" height="1" fill="#000"/><rect x="3" y="41" width="7" height="1" fill="#000" opacity="0.25"/><rect x="15" y="40" width="7" height="1" fill="#000"/><rect x="15" y="41" width="7" height="1" fill="#000" opacity="0.25"/><rect x="27" y="40" width="7" height="1" fill="#000"/><rect x="27" y="41" width="7" height="1" fill="#000" opacity="0.25"/><rect x="39" y="40" width="7" height="1" fill="#000"/><rect x="39" y="41" width="7" height="1" fill="#000" opacity="0.25"/><rect x="51" y="40" width="7" height="1" fill="#000"/><rect x="51" y="41" width="7" height="1" fill="#000" opacity="0.25"/></svg>
<svg class="a" style="left:1240px;top:77px;shape-rendering:crispEdges;" width="61" height="46" viewBox="0 0 61 46"><rect x="0" y="0" width="12" height="9" fill="#FFC000"/><rect x="13" y="0" width="11" height="9" fill="#FFC000"/><rect x="25" y="0" width="11" height="9" fill="#FFC000"/><rect x="37" y="0" width="11" height="9" fill="#FFC000"/><rect x="49" y="0" width="12" height="9" fill="#FFC000"/><rect x="0" y="10" width="12" height="8" fill="#FFE699"/><rect x="13" y="10" width="11" height="8" fill="#FFE699"/><rect x="25" y="10" width="11" height="8" fill="#FFE699"/><rect x="37" y="10" width="11" height="8" fill="#FFE699"/><rect x="49" y="10" width="12" height="8" fill="#FFE699"/><rect x="0" y="19" width="12" height="8" fill="#FFF2CC"/><rect x="13" y="19" width="11" height="8" fill="#FFF2CC"/><rect x="25" y="19" width="11" height="8" fill="#FFF2CC"/><rect x="37" y="19" width="11" height="8" fill="#FFF2CC"/><rect x="49" y="19" width="12" height="8" fill="#FFF2CC"/><rect x="0" y="28" width="12" height="8" fill="#FFE699"/><rect x="13" y="28" width="11" height="8" fill="#FFE699"/><rect x="25" y="28" width="11" height="8" fill="#FFE699"/><rect x="37" y="28" width="11" height="8" fill="#FFE699"/><rect x="49" y="28" width="12" height="8" fill="#FFE699"/><rect x="0" y="37" width="12" height="9" fill="#FFF2CC"/><rect x="13" y="37" width="11" height="9" fill="#FFF2CC"/><rect x="25" y="37" width="11" height="9" fill="#FFF2CC"/><rect x="37" y="37" width="11" height="9" fill="#FFF2CC"/><rect x="49" y="37" width="12" height="9" fill="#FFF2CC"/><rect x="3" y="4" width="7" height="1" fill="#fff"/><rect x="15" y="4" width="7" height="1" fill="#fff"/><rect x="27" y="4" width="7" height="1" fill="#fff"/><rect x="39" y="4" width="7" height="1" fill="#fff"/><rect x="51" y="4" width="7" height="1" fill="#fff"/><rect x="3" y="13" width="7" height="1" fill="#000"/><rect x="3" y="14" width="7" height="1" fill="#000" opacity="0.25"/><rect x="15" y="13" width="7" height="1" fill="#000"/><rect x="15" y="14" width="7" height="1" fill="#000" opacity="0.25"/><rect x="27" y="13" width="7" height="1" fill="#000"/><rect x="27" y="14" width="7" height="1" fill="#000" opacity="0.25"/><rect x="39" y="13" width="7" height="1" fill="#000"/><rect x="39" y="14" width="7" height="1" fill="#000" opacity="0.25"/><rect x="51" y="13" width="7" height="1" fill="#000"/><rect x="51" y="14" width="7" height="1" fill="#000" opacity="0.25"/><rect x="3" y="22" width="7" height="1" fill="#000"/><rect x="3" y="23" width="7" height="1" fill="#000" opacity="0.25"/><rect x="15" y="22" width="7" height="1" fill="#000"/><rect x="15" y="23" width="7" height="1" fill="#000" opacity="0.25"/><rect x="27" y="22" width="7" height="1" fill="#000"/><rect x="27" y="23" width="7" height="1" fill="#000" opacity="0.25"/><rect x="39" y="22" width="7" height="1" fill="#000"/><rect x="39" y="23" width="7" height="1" fill="#000" opacity="0.25"/><rect x="51" y="22" width="7" height="1" fill="#000"/><rect x="51" y="23" width="7" height="1" fill="#000" opacity="0.25"/><rect x="3" y="31" width="7" height="1" fill="#000"/><rect x="3" y="32" width="7" height="1" fill="#000" opacity="0.25"/><rect x="15" y="31" width="7" height="1" fill="#000"/><rect x="15" y="32" width="7" height="1" fill="#000" opacity="0.25"/><rect x="27" y="31" width="7" height="1" fill="#000"/><rect x="27" y="32" width="7" height="1" fill="#000" opacity="0.25"/><rect x="39" y="31" width="7" height="1" fill="#000"/><rect x="39" y="32" width="7" height="1" fill="#000" opacity="0.25"/><rect x="51" y="31" width="7" height="1" fill="#000"/><rect x="51" y="32" width="7" height="1" fill="#000" opacity="0.25"/><rect x="3" y="40" width="7" height="1" fill="#000"/><rect x="3" y="41" width="7" height="1" fill="#000" opacity="0.25"/><rect x="15" y="40" width="7" height="1" fill="#000"/><rect x="15" y="41" width="7" height="1" fill="#000" opacity="0.25"/><rect x="27" y="40" width="7" height="1" fill="#000"/><rect x="27" y="41" width="7" height="1" fill="#000" opacity="0.25"/><rect x="39" y="40" width="7" height="1" fill="#000"/><rect x="39" y="41" width="7" height="1" fill="#000" opacity="0.25"/><rect x="51" y="40" width="7" height="1" fill="#000"/><rect x="51" y="41" width="7" height="1" fill="#000" opacity="0.25"/></svg>
<svg class="a" style="left:1309px;top:77px;shape-rendering:crispEdges;" width="61" height="46" viewBox="0 0 61 46"><rect x="0" y="0" width="12" height="9" fill="#5B9BD5"/><rect x="13" y="0" width="11" height="9" fill="#5B9BD5"/><rect x="25" y="0" width="11" height="9" fill="#5B9BD5"/><rect x="37" y="0" width="11" height="9" fill="#5B9BD5"/><rect x="49" y="0" width="12" height="9" fill="#5B9BD5"/><rect x="0" y="10" width="12" height="8" fill="#BDD7EE"/><rect x="13" y="10" width="11" height="8" fill="#BDD7EE"/><rect x="25" y="10" width="11" height="8" fill="#BDD7EE"/><rect x="37" y="10" width="11" height="8" fill="#BDD7EE"/><rect x="49" y="10" width="12" height="8" fill="#BDD7EE"/><rect x="0" y="19" width="12" height="8" fill="#DDEBF7"/><rect x="13" y="19" width="11" height="8" fill="#DDEBF7"/><rect x="25" y="19" width="11" height="8" fill="#DDEBF7"/><rect x="37" y="19" width="11" height="8" fill="#DDEBF7"/><rect x="49" y="19" width="12" height="8" fill="#DDEBF7"/><rect x="0" y="28" width="12" height="8" fill="#BDD7EE"/><rect x="13" y="28" width="11" height="8" fill="#BDD7EE"/><rect x="25" y="28" width="11" height="8" fill="#BDD7EE"/><rect x="37" y="28" width="11" height="8" fill="#BDD7EE"/><rect x="49" y="28" width="12" height="8" fill="#BDD7EE"/><rect x="0" y="37" width="12" height="9" fill="#DDEBF7"/><rect x="13" y="37" width="11" height="9" fill="#DDEBF7"/><rect x="25" y="37" width="11" height="9" fill="#DDEBF7"/><rect x="37" y="37" width="11" height="9" fill="#DDEBF7"/><rect x="49" y="37" width="12" height="9" fill="#DDEBF7"/><rect x="3" y="4" width="7" height="1" fill="#fff"/><rect x="15" y="4" width="7" height="1" fill="#fff"/><rect x="27" y="4" width="7" height="1" fill="#fff"/><rect x="39" y="4" width="7" height="1" fill="#fff"/><rect x="51" y="4" width="7" height="1" fill="#fff"/><rect x="3" y="13" width="7" height="1" fill="#000"/><rect x="3" y="14" width="7" height="1" fill="#000" opacity="0.25"/><rect x="15" y="13" width="7" height="1" fill="#000"/><rect x="15" y="14" width="7" height="1" fill="#000" opacity="0.25"/><rect x="27" y="13" width="7" height="1" fill="#000"/><rect x="27" y="14" width="7" height="1" fill="#000" opacity="0.25"/><rect x="39" y="13" width="7" height="1" fill="#000"/><rect x="39" y="14" width="7" height="1" fill="#000" opacity="0.25"/><rect x="51" y="13" width="7" height="1" fill="#000"/><rect x="51" y="14" width="7" height="1" fill="#000" opacity="0.25"/><rect x="3" y="22" width="7" height="1" fill="#000"/><rect x="3" y="23" width="7" height="1" fill="#000" opacity="0.25"/><rect x="15" y="22" width="7" height="1" fill="#000"/><rect x="15" y="23" width="7" height="1" fill="#000" opacity="0.25"/><rect x="27" y="22" width="7" height="1" fill="#000"/><rect x="27" y="23" width="7" height="1" fill="#000" opacity="0.25"/><rect x="39" y="22" width="7" height="1" fill="#000"/><rect x="39" y="23" width="7" height="1" fill="#000" opacity="0.25"/><rect x="51" y="22" width="7" height="1" fill="#000"/><rect x="51" y="23" width="7" height="1" fill="#000" opacity="0.25"/><rect x="3" y="31" width="7" height="1" fill="#000"/><rect x="3" y="32" width="7" height="1" fill="#000" opacity="0.25"/><rect x="15" y="31" width="7" height="1" fill="#000"/><rect x="15" y="32" width="7" height="1" fill="#000" opacity="0.25"/><rect x="27" y="31" width="7" height="1" fill="#000"/><rect x="27" y="32" width="7" height="1" fill="#000" opacity="0.25"/><rect x="39" y="31" width="7" height="1" fill="#000"/><rect x="39" y="32" width="7" height="1" fill="#000" opacity="0.25"/><rect x="51" y="31" width="7" height="1" fill="#000"/><rect x="51" y="32" width="7" height="1" fill="#000" opacity="0.25"/><rect x="3" y="40" width="7" height="1" fill="#000"/><rect x="3" y="41" width="7" height="1" fill="#000" opacity="0.25"/><rect x="15" y="40" width="7" height="1" fill="#000"/><rect x="15" y="41" width="7" height="1" fill="#000" opacity="0.25"/><rect x="27" y="40" width="7" height="1" fill="#000"/><rect x="27" y="41" width="7" height="1" fill="#000" opacity="0.25"/><rect x="39" y="40" width="7" height="1" fill="#000"/><rect x="39" y="41" width="7" height="1" fill="#000" opacity="0.25"/><rect x="51" y="40" width="7" height="1" fill="#000"/><rect x="51" y="41" width="7" height="1" fill="#000" opacity="0.25"/></svg>
<div class="a" style="left:1375px;top:70px;width:15px;height:21px;background:#F3F2F1;border:1px solid #B3B0AD;"></div>
<div class="a" style="left:1375px;top:90px;width:15px;height:21px;background:#F3F2F1;border:1px solid #B3B0AD;"></div>
<div class="a" style="left:1375px;top:110px;width:15px;height:20px;background:#F3F2F1;border:1px solid #B3B0AD;"></div>
<svg class="a" style="left:1378px;top:76px;" width="10" height="7" viewBox="0 0 10 7"><path d="M1.6 5.2 L4.6 2.2 L7.6 5.2" fill="none" stroke="#3B3A39" stroke-width="1.5"/></svg>
<svg class="a" style="left:1378px;top:97px;" width="10" height="7" viewBox="0 0 10 7"><path d="M1.6 1.8 L4.6 4.8 L7.6 1.8" fill="none" stroke="#3B3A39" stroke-width="1.5"/></svg>
<svg class="a" style="left:1378px;top:115px;" width="10" height="9" viewBox="0 0 10 9"><path d="M1.3 1.5 H8" stroke="#3B3A39" stroke-width="1.2"/><path d="M1.6 4 L4.6 7 L7.6 4" fill="none" stroke="#3B3A39" stroke-width="1.5"/></svg>
<div class="a" style="left:0px;top:168px;width:1918px;height:846px;background:#E6E6E6;"></div>
<div class="a" style="left:5px;top:171px;width:102px;height:26px;background:#fff;border:1px solid #C8C8C8;"></div>
<svg class="a" style="left:93px;top:181px;" width="7" height="5" viewBox="0 0 7 5"><path d="M0 0.5 H6.6 L3.3 4 Z" fill="#777"/></svg>
<div class="a" style="left:121px;top:179px;width:2px;height:2px;background:#A6A6A6;"></div>
<div class="a" style="left:121px;top:183.3px;width:2px;height:2px;background:#A6A6A6;"></div>
<div class="a" style="left:121px;top:187.6px;width:2px;height:2px;background:#A6A6A6;"></div>
<div class="a" style="left:137px;top:171px;width:110px;height:26px;background:#fff;border:1px solid #C8C8C8;"></div>
<svg class="a" style="left:150px;top:179px;" width="12" height="11" viewBox="0 0 12 11"><path d="M1 1 L10.6 9.8 M10.6 1 L1 9.8" stroke="#ADADAD" stroke-width="1.7"/></svg>
<svg class="a" style="left:185px;top:178px;" width="15" height="12" viewBox="0 0 15 12"><path d="M1.4 6.8 L5.2 10.4 L13.4 1.4" fill="none" stroke="#C6C6C6" stroke-width="2.2"/></svg>
<div class="a" style="left:250px;top:171px;width:1665px;height:26px;background:#fff;border:1px solid #C8C8C8;"></div>
<svg class="a" style="left:1902px;top:180px;" width="11" height="7" viewBox="0 0 11 7"><path d="M1.4 1.4 L5.2 5.2 L9 1.4" fill="none" stroke="#4A4A4A" stroke-width="1.8"/></svg>
<div class="a" style="left:0px;top:207px;width:1899px;height:25px;background:#E6E6E6;"></div>
<div class="a" style="left:37px;top:207px;width:100px;height:24px;background:#D2D2D2;"></div>
<svg class="a" style="left:16px;top:211px;" width="18" height="18" viewBox="0 0 18 18"><path d="M17 1 V17 H1 Z" fill="#B4B4B4"/></svg>
<div class="a" style="left:137px;top:207px;width:1px;height:24px;background:linear-gradient(#D2D2D2,#B0B0B0 45%,#9A9A9A);"></div>
<div class="a" style="left:283px;top:207px;width:1px;height:24px;background:linear-gradient(#D2D2D2,#B0B0B0 45%,#9A9A9A);"></div>
<div class="a" style="left:452px;top:207px;width:1px;height:24px;background:linear-gradient(#D2D2D2,#B0B0B0 45%,#9A9A9A);"></div>
<div class="a" style="left:602px;top:207px;width:1px;height:24px;background:linear-gradient(#D2D2D2,#B0B0B0 45%,#9A9A9A);"></div>
<div class="a" style="left:809px;top:207px;width:1px;height:24px;background:linear-gradient(#D2D2D2,#B0B0B0 45%,#9A9A9A);"></div>
<div class="a" style="left:961px;top:207px;width:1px;height:24px;background:linear-gradient(#D2D2D2,#B0B0B0 45%,#9A9A9A);"></div>
<div class="a" style="left:1156px;top:207px;width:1px;height:24px;background:linear-gradient(#D2D2D2,#B0B0B0 45%,#9A9A9A);"></div>
<div class="a" style="left:1593px;top:207px;width:1px;height:24px;background:linear-gradient(#D2D2D2,#B0B0B0 45%,#9A9A9A);"></div>
<div class="a" style="left:1778px;top:207px;width:1px;height:24px;background:linear-gradient(#D2D2D2,#B0B0B0 45%,#9A9A9A);"></div>
<div class="a" style="left:36px;top:207px;width:1px;height:25px;background:#ABABAB;"></div>
<div class="a" style="left:0px;top:231px;width:1899px;height:1px;background:#A0A0A0;"></div>
<div class="a" style="left:0px;top:232px;width:36px;height:782px;background:#E6E6E6;"></div>
<div class="a" style="left:0px;top:232px;width:36px;height:26px;background:#D2D2D2;"></div>
<div class="a" style="left:36px;top:232px;width:1px;height:782px;background:#A0A0A0;"></div>
<div class="a" style="left:0px;top:257px;width:36px;height:1px;background:linear-gradient(90deg,#D0D0D0,#B4B4B4 40%,#A4A4A4);"></div>
<div class="a" style="left:0px;top:283px;width:36px;height:1px;background:linear-gradient(90deg,#D0D0D0,#B4B4B4 40%,#A4A4A4);"></div>
<div class="a" style="left:0px;top:309px;width:36px;height:1px;background:linear-gradient(90deg,#D0D0D0,#B4B4B4 40%,#A4A4A4);"></div>
<div class="a" style="left:0px;top:335px;width:36px;height:1px;background:linear-gradient(90deg,#D0D0D0,#B4B4B4 40%,#A4A4A4);"></div>
<div class="a" style="left:0px;top:361px;width:36px;height:1px;background:linear-gradient(90deg,#D0D0D0,#B4B4B4 40%,#A4A4A4);"></div>
<div class="a" style="left:0px;top:387px;width:36px;height:1px;background:linear-gradient(90deg,#D0D0D0,#B4B4B4 40%,#A4A4A4);"></div>
<div class="a" style="left:0px;top:413px;width:36px;height:1px;background:linear-gradient(90deg,#D0D0D0,#B4B4B4 40%,#A4A4A4);"></div>
<div class="a" style="left:0px;top:439px;width:36px;height:1px;background:linear-gradient(90deg,#D0D0D0,#B4B4B4 40%,#A4A4A4);"></div>
<div class="a" style="left:0px;top:465px;width:36px;height:1px;background:linear-gradient(90deg,#D0D0D0,#B4B4B4 40%,#A4A4A4);"></div>
<div class="a" style="left:0px;top:491px;width:36px;height:1px;background:linear-gradient(90deg,#D0D0D0,#B4B4B4 40%,#A4A4A4);"></div>
<div class="a" style="left:0px;top:517px;width:36px;height:1px;background:linear-gradient(90deg,#D0D0D0,#B4B4B4 40%,#A4A4A4);"></div>
<div class="a" style="left:0px;top:543px;width:36px;height:1px;background:linear-gradient(90deg,#D0D0D0,#B4B4B4 40%,#A4A4A4);"></div>
<div class="a" style="left:0px;top:569px;width:36px;height:1px;background:linear-gradient(90deg,#D0D0D0,#B4B4B4 40%,#A4A4A4);"></div>
<div class="a" style="left:0px;top:595px;width:36px;height:1px;background:linear-gradient(90deg,#D0D0D0,#B4B4B4 40%,#A4A4A4);"></div>
<div class="a" style="left:0px;top:621px;width:36px;height:1px;background:linear-gradient(90deg,#D0D0D0,#B4B4B4 40%,#A4A4A4);"></div>
<div class="a" style="left:0px;top:647px;width:36px;height:1px;background:linear-gradient(90deg,#D0D0D0,#B4B4B4 40%,#A4A4A4);"></div>
<div class="a" style="left:0px;top:673px;width:36px;height:1px;background:linear-gradient(90deg,#D0D0D0,#B4B4B4 40%,#A4A4A4);"></div>
<div class="a" style="left:0px;top:699px;width:36px;height:1px;background:linear-gradient(90deg,#D0D0D0,#B4B4B4 40%,#A4A4A4);"></div>
<div class="a" style="left:0px;top:725px;width:36px;height:1px;background:linear-gradient(90deg,#D0D0D0,#B4B4B4 40%,#A4A4A4);"></div>
<div class="a" style="left:0px;top:751px;width:36px;height:1px;background:linear-gradient(90deg,#D0D0D0,#B4B4B4 40%,#A4A4A4);"></div>
<div class="a" style="left:0px;top:777px;width:36px;height:1px;background:linear-gradient(90deg,#D0D0D0,#B4B4B4 40%,#A4A4A4);"></div>
<div class="a" style="left:0px;top:803px;width:36px;height:1px;background:linear-gradient(90deg,#D0D0D0,#B4B4B4 40%,#A4A4A4);"></div>
<div class="a" style="left:0px;top:829px;width:36px;height:1px;background:linear-gradient(90deg,#D0D0D0,#B4B4B4 40%,#A4A4A4);"></div>
<div class="a" style="left:0px;top:855px;width:36px;height:1px;background:linear-gradient(90deg,#D0D0D0,#B4B4B4 40%,#A4A4A4);"></div>
<div class="a" style="left:0px;top:881px;width:36px;height:1px;background:linear-gradient(90deg,#D0D0D0,#B4B4B4 40%,#A4A4A4);"></div>
<div class="a" style="left:0px;top:907px;width:36px;height:1px;background:linear-gradient(90deg,#D0D0D0,#B4B4B4 40%,#A4A4A4);"></div>
<div class="a" style="left:0px;top:933px;width:36px;height:1px;background:linear-gradient(90deg,#D0D0D0,#B4B4B4 40%,#A4A4A4);"></div>
<div class="a" style="left:0px;top:959px;width:36px;height:1px;background:linear-gradient(90deg,#D0D0D0,#B4B4B4 40%,#A4A4A4);"></div>
<div class="a" style="left:0px;top:985px;width:36px;height:1px;background:linear-gradient(90deg,#D0D0D0,#B4B4B4 40%,#A4A4A4);"></div>
<div class="a" style="left:0px;top:1011px;width:36px;height:1px;background:linear-gradient(90deg,#D0D0D0,#B4B4B4 40%,#A4A4A4);"></div>
<div class="a" style="left:0px;top:1037px;width:36px;height:1px;background:linear-gradient(90deg,#D0D0D0,#B4B4B4 40%,#A4A4A4);"></div>
<div class="a" style="left:37px;top:232px;width:1861px;height:782px;background:#fff;"></div>
<div class="a" style="left:37px;top:232px;width:1861px;height:25px;background:#70AD47;"></div>
<div class="a" style="left:37px;top:258px;width:1861px;height:25px;background:#E2EFDA;"></div>
<div class="a" style="left:37px;top:283px;width:1861px;height:1px;background:#A9D08E;"></div>
<div class="a" style="left:137px;top:284px;width:1px;height:25px;background:#D4D4D4;"></div>
<div class="a" style="left:283px;top:284px;width:1px;height:25px;background:#D4D4D4;"></div>
<div class="a" style="left:452px;top:284px;width:1px;height:25px;background:#D4D4D4;"></div>
<div class="a" style="left:602px;top:284px;width:1px;height:25px;background:#D4D4D4;"></div>
<div class="a" style="left:809px;top:284px;width:1px;height:25px;background:#D4D4D4;"></div>
<div class="a" style="left:961px;top:284px;width:1px;height:25px;background:#D4D4D4;"></div>
<div class="a" style="left:1156px;top:284px;width:1px;height:25px;background:#D4D4D4;"></div>
<div class="a" style="left:1593px;top:284px;width:1px;height:25px;background:#D4D4D4;"></div>
<div class="a" style="left:1778px;top:284px;width:1px;height:25px;background:#D4D4D4;"></div>
<div class="a" style="left:37px;top:309px;width:1861px;height:1px;background:#A9D08E;"></div>
<div class="a" style="left:37px;top:310px;width:1861px;height:25px;background:#E2EFDA;"></div>
<div class="a" style="left:37px;top:335px;width:1861px;height:1px;background:#A9D08E;"></div>
<div class="a" style="left:137px;top:336px;width:1px;height:25px;background:#D4D4D4;"></div>
<div class="a" style="left:283px;top:336px;width:1px;height:25px;background:#D4D4D4;"></div>
<div class="a" style="left:452px;top:336px;width:1px;height:25px;background:#D4D4D4;"></div>
<div class="a" style="left:602px;top:336px;width:1px;height:25px;background:#D4D4D4;"></div>
<div class="a" style="left:809px;top:336px;width:1px;height:25px;background:#D4D4D4;"></div>
<div class="a" style="left:961px;top:336px;width:1px;height:25px;background:#D4D4D4;"></div>
<div class="a" style="left:1156px;top:336px;width:1px;height:25px;background:#D4D4D4;"></div>
<div class="a" style="left:1593px;top:336px;width:1px;height:25px;background:#D4D4D4;"></div>
<div class="a" style="left:1778px;top:336px;width:1px;height:25px;background:#D4D4D4;"></div>
<div class="a" style="left:37px;top:361px;width:1861px;height:1px;background:#A9D08E;"></div>
<div class="a" style="left:37px;top:362px;width:1861px;height:25px;background:#E2EFDA;"></div>
<div class="a" style="left:37px;top:387px;width:1861px;height:1px;background:#A9D08E;"></div>
<div class="a" style="left:137px;top:388px;width:1px;height:25px;background:#D4D4D4;"></div>
<div class="a" style="left:283px;top:388px;width:1px;height:25px;background:#D4D4D4;"></div>
<div class="a" style="left:452px;top:388px;width:1px;height:25px;background:#D4D4D4;"></div>
<div class="a" style="left:602px;top:388px;width:1px;height:25px;background:#D4D4D4;"></div>
<div class="a" style="left:809px;top:388px;width:1px;height:25px;background:#D4D4D4;"></div>
<div class="a" style="left:961px;top:388px;width:1px;height:25px;background:#D4D4D4;"></div>
<div class="a" style="left:1156px;top:388px;width:1px;height:25px;background:#D4D4D4;"></div>
<div class="a" style="left:1593px;top:388px;width:1px;height:25px;background:#D4D4D4;"></div>
<div class="a" style="left:1778px;top:388px;width:1px;height:25px;background:#D4D4D4;"></div>
<div class="a" style="left:37px;top:413px;width:1861px;height:1px;background:#A9D08E;"></div>
<div class="a" style="left:37px;top:414px;width:1861px;height:25px;background:#E2EFDA;"></div>
<div class="a" style="left:37px;top:439px;width:1861px;height:1px;background:#A9D08E;"></div>
<div class="a" style="left:137px;top:440px;width:1px;height:25px;background:#D4D4D4;"></div>
<div class="a" style="left:283px;top:440px;width:1px;height:25px;background:#D4D4D4;"></div>
<div class="a" style="left:452px;top:440px;width:1px;height:25px;background:#D4D4D4;"></div>
<div class="a" style="left:602px;top:440px;width:1px;height:25px;background:#D4D4D4;"></div>
<div class="a" style="left:809px;top:440px;width:1px;height:25px;background:#D4D4D4;"></div>
<div class="a" style="left:961px;top:440px;width:1px;height:25px;background:#D4D4D4;"></div>
<div class="a" style="left:1156px;top:440px;width:1px;height:25px;background:#D4D4D4;"></div>
<div class="a" style="left:1593px;top:440px;width:1px;height:25px;background:#D4D4D4;"></div>
<div class="a" style="left:1778px;top:440px;width:1px;height:25px;background:#D4D4D4;"></div>
<div class="a" style="left:37px;top:465px;width:1861px;height:1px;background:#A9D08E;"></div>
<div class="a" style="left:37px;top:466px;width:1861px;height:25px;background:#E2EFDA;"></div>
<div class="a" style="left:37px;top:491px;width:1861px;height:1px;background:#A9D08E;"></div>
<div class="a" style="left:137px;top:492px;width:1px;height:25px;background:#D4D4D4;"></div>
<div class="a" style="left:283px;top:492px;width:1px;height:25px;background:#D4D4D4;"></div>
<div class="a" style="left:452px;top:492px;width:1px;height:25px;background:#D4D4D4;"></div>
<div class="a" style="left:602px;top:492px;width:1px;height:25px;background:#D4D4D4;"></div>
<div class="a" style="left:809px;top:492px;width:1px;height:25px;background:#D4D4D4;"></div>
<div class="a" style="left:961px;top:492px;width:1px;height:25px;background:#D4D4D4;"></div>
<div class="a" style="left:1156px;top:492px;width:1px;height:25px;background:#D4D4D4;"></div>
<div class="a" style="left:1593px;top:492px;width:1px;height:25px;background:#D4D4D4;"></div>
<div class="a" style="left:1778px;top:492px;width:1px;height:25px;background:#D4D4D4;"></div>
<div class="a" style="left:37px;top:517px;width:1861px;height:1px;background:#A9D08E;"></div>
<div class="a" style="left:37px;top:518px;width:1861px;height:25px;background:#E2EFDA;"></div>
<div class="a" style="left:37px;top:543px;width:1861px;height:1px;background:#A9D08E;"></div>
<div class="a" style="left:137px;top:544px;width:1px;height:25px;background:#D4D4D4;"></div>
<div class="a" style="left:283px;top:544px;width:1px;height:25px;background:#D4D4D4;"></div>
<div class="a" style="left:452px;top:544px;width:1px;height:25px;background:#D4D4D4;"></div>
<div class="a" style="left:602px;top:544px;width:1px;height:25px;background:#D4D4D4;"></div>
<div class="a" style="left:809px;top:544px;width:1px;height:25px;background:#D4D4D4;"></div>
<div class="a" style="left:961px;top:544px;width:1px;height:25px;background:#D4D4D4;"></div>
<div class="a" style="left:1156px;top:544px;width:1px;height:25px;background:#D4D4D4;"></div>
<div class="a" style="left:1593px;top:544px;width:1px;height:25px;background:#D4D4D4;"></div>
<div class="a" style="left:1778px;top:544px;width:1px;height:25px;background:#D4D4D4;"></div>
<div class="a" style="left:37px;top:569px;width:1861px;height:1px;background:#A9D08E;"></div>
<div class="a" style="left:37px;top:570px;width:1861px;height:25px;background:#E2EFDA;"></div>
<div class="a" style="left:37px;top:595px;width:1861px;height:1px;background:#A9D08E;"></div>
<div class="a" style="left:137px;top:596px;width:1px;height:25px;background:#D4D4D4;"></div>
<div class="a" style="left:283px;top:596px;width:1px;height:25px;background:#D4D4D4;"></div>
<div class="a" style="left:452px;top:596px;width:1px;height:25px;background:#D4D4D4;"></div>
<div class="a" style="left:602px;top:596px;width:1px;height:25px;background:#D4D4D4;"></div>
<div class="a" style="left:809px;top:596px;width:1px;height:25px;background:#D4D4D4;"></div>
<div class="a" style="left:961px;top:596px;width:1px;height:25px;background:#D4D4D4;"></div>
<div class="a" style="left:1156px;top:596px;width:1px;height:25px;background:#D4D4D4;"></div>
<div class="a" style="left:1593px;top:596px;width:1px;height:25px;background:#D4D4D4;"></div>
<div class="a" style="left:1778px;top:596px;width:1px;height:25px;background:#D4D4D4;"></div>
<div class="a" style="left:37px;top:621px;width:1861px;height:1px;background:#A9D08E;"></div>
<div class="a" style="left:37px;top:622px;width:1861px;height:25px;background:#E2EFDA;"></div>
<div class="a" style="left:37px;top:647px;width:1861px;height:1px;background:#A9D08E;"></div>
<div class="a" style="left:137px;top:648px;width:1px;height:25px;background:#D4D4D4;"></div>
<div class="a" style="left:283px;top:648px;width:1px;height:25px;background:#D4D4D4;"></div>
<div class="a" style="left:452px;top:648px;width:1px;height:25px;background:#D4D4D4;"></div>
<div class="a" style="left:602px;top:648px;width:1px;height:25px;background:#D4D4D4;"></div>
<div class="a" style="left:809px;top:648px;width:1px;height:25px;background:#D4D4D4;"></div>
<div class="a" style="left:961px;top:648px;width:1px;height:25px;background:#D4D4D4;"></div>
<div class="a" style="left:1156px;top:648px;width:1px;height:25px;background:#D4D4D4;"></div>
<div class="a" style="left:1593px;top:648px;width:1px;height:25px;background:#D4D4D4;"></div>
<div class="a" style="left:1778px;top:648px;width:1px;height:25px;background:#D4D4D4;"></div>
<div class="a" style="left:37px;top:673px;width:1861px;height:1px;background:#A9D08E;"></div>
<div class="a" style="left:37px;top:674px;width:1861px;height:25px;background:#E2EFDA;"></div>
<div class="a" style="left:37px;top:699px;width:1861px;height:1px;background:#A9D08E;"></div>
<div class="a" style="left:137px;top:700px;width:1px;height:25px;background:#D4D4D4;"></div>
<div class="a" style="left:283px;top:700px;width:1px;height:25px;background:#D4D4D4;"></div>
<div class="a" style="left:452px;top:700px;width:1px;height:25px;background:#D4D4D4;"></div>
<div class="a" style="left:602px;top:700px;width:1px;height:25px;background:#D4D4D4;"></div>
<div class="a" style="left:809px;top:700px;width:1px;height:25px;background:#D4D4D4;"></div>
<div class="a" style="left:961px;top:700px;width:1px;height:25px;background:#D4D4D4;"></div>
<div class="a" style="left:1156px;top:700px;width:1px;height:25px;background:#D4D4D4;"></div>
<div class="a" style="left:1593px;top:700px;width:1px;height:25px;background:#D4D4D4;"></div>
<div class="a" style="left:1778px;top:700px;width:1px;height:25px;background:#D4D4D4;"></div>
<div class="a" style="left:37px;top:725px;width:1861px;height:1px;background:#A9D08E;"></div>
<div class="a" style="left:37px;top:726px;width:1861px;height:25px;background:#E2EFDA;"></div>
<div class="a" style="left:37px;top:751px;width:1861px;height:1px;background:#A9D08E;"></div>
<div class="a" style="left:137px;top:752px;width:1px;height:25px;background:#D4D4D4;"></div>
<div class="a" style="left:283px;top:752px;width:1px;height:25px;background:#D4D4D4;"></div>
<div class="a" style="left:452px;top:752px;width:1px;height:25px;background:#D4D4D4;"></div>
<div class="a" style="left:602px;top:752px;width:1px;height:25px;background:#D4D4D4;"></div>
<div class="a" style="left:809px;top:752px;width:1px;height:25px;background:#D4D4D4;"></div>
<div class="a" style="left:961px;top:752px;width:1px;height:25px;background:#D4D4D4;"></div>
<div class="a" style="left:1156px;top:752px;width:1px;height:25px;background:#D4D4D4;"></div>
<div class="a" style="left:1593px;top:752px;width:1px;height:25px;background:#D4D4D4;"></div>
<div class="a" style="left:1778px;top:752px;width:1px;height:25px;background:#D4D4D4;"></div>
<div class="a" style="left:37px;top:777px;width:1861px;height:1px;background:#A9D08E;"></div>
<div class="a" style="left:37px;top:778px;width:1861px;height:25px;background:#E2EFDA;"></div>
<div class="a" style="left:37px;top:803px;width:1861px;height:1px;background:#A9D08E;"></div>
<div class="a" style="left:137px;top:804px;width:1px;height:25px;background:#D4D4D4;"></div>
<div class="a" style="left:283px;top:804px;width:1px;height:25px;background:#D4D4D4;"></div>
<div class="a" style="left:452px;top:804px;width:1px;height:25px;background:#D4D4D4;"></div>
<div class="a" style="left:602px;top:804px;width:1px;height:25px;background:#D4D4D4;"></div>
<div class="a" style="left:809px;top:804px;width:1px;height:25px;background:#D4D4D4;"></div>
<div class="a" style="left:961px;top:804px;width:1px;height:25px;background:#D4D4D4;"></div>
<div class="a" style="left:1156px;top:804px;width:1px;height:25px;background:#D4D4D4;"></div>
<div class="a" style="left:1593px;top:804px;width:1px;height:25px;background:#D4D4D4;"></div>
<div class="a" style="left:1778px;top:804px;width:1px;height:25px;background:#D4D4D4;"></div>
<div class="a" style="left:37px;top:829px;width:1861px;height:1px;background:#A9D08E;"></div>
<div class="a" style="left:37px;top:830px;width:1861px;height:25px;background:#E2EFDA;"></div>
<div class="a" style="left:37px;top:855px;width:1861px;height:1px;background:#A9D08E;"></div>
<div class="a" style="left:137px;top:856px;width:1px;height:25px;background:#D4D4D4;"></div>
<div class="a" style="left:283px;top:856px;width:1px;height:25px;background:#D4D4D4;"></div>
<div class="a" style="left:452px;top:856px;width:1px;height:25px;background:#D4D4D4;"></div>
<div class="a" style="left:602px;top:856px;width:1px;height:25px;background:#D4D4D4;"></div>
<div class="a" style="left:809px;top:856px;width:1px;height:25px;background:#D4D4D4;"></div>
<div class="a" style="left:961px;top:856px;width:1px;height:25px;background:#D4D4D4;"></div>
<div class="a" style="left:1156px;top:856px;width:1px;height:25px;background:#D4D4D4;"></div>
<div class="a" style="left:1593px;top:856px;width:1px;height:25px;background:#D4D4D4;"></div>
<div class="a" style="left:1778px;top:856px;width:1px;height:25px;background:#D4D4D4;"></div>
<div class="a" style="left:37px;top:881px;width:1861px;height:1px;background:#A9D08E;"></div>
<div class="a" style="left:37px;top:882px;width:1861px;height:25px;background:#E2EFDA;"></div>
<div class="a" style="left:37px;top:907px;width:1861px;height:1px;background:#A9D08E;"></div>
<div class="a" style="left:137px;top:908px;width:1px;height:25px;background:#D4D4D4;"></div>
<div class="a" style="left:283px;top:908px;width:1px;height:25px;background:#D4D4D4;"></div>
<div class="a" style="left:452px;top:908px;width:1px;height:25px;background:#D4D4D4;"></div>
<div class="a" style="left:602px;top:908px;width:1px;height:25px;background:#D4D4D4;"></div>
<div class="a" style="left:809px;top:908px;width:1px;height:25px;background:#D4D4D4;"></div>
<div class="a" style="left:961px;top:908px;width:1px;height:25px;background:#D4D4D4;"></div>
<div class="a" style="left:1156px;top:908px;width:1px;height:25px;background:#D4D4D4;"></div>
<div class="a" style="left:1593px;top:908px;width:1px;height:25px;background:#D4D4D4;"></div>
<div class="a" style="left:1778px;top:908px;width:1px;height:25px;background:#D4D4D4;"></div>
<div class="a" style="left:37px;top:933px;width:1861px;height:1px;background:#A9D08E;"></div>
<div class="a" style="left:37px;top:934px;width:1861px;height:25px;background:#E2EFDA;"></div>
<div class="a" style="left:37px;top:959px;width:1861px;height:1px;background:#A9D08E;"></div>
<div class="a" style="left:137px;top:960px;width:1px;height:25px;background:#D4D4D4;"></div>
<div class="a" style="left:283px;top:960px;width:1px;height:25px;background:#D4D4D4;"></div>
<div class="a" style="left:452px;top:960px;width:1px;height:25px;background:#D4D4D4;"></div>
<div class="a" style="left:602px;top:960px;width:1px;height:25px;background:#D4D4D4;"></div>
<div class="a" style="left:809px;top:960px;width:1px;height:25px;background:#D4D4D4;"></div>
<div class="a" style="left:961px;top:960px;width:1px;height:25px;background:#D4D4D4;"></div>
<div class="a" style="left:1156px;top:960px;width:1px;height:25px;background:#D4D4D4;"></div>
<div class="a" style="left:1593px;top:960px;width:1px;height:25px;background:#D4D4D4;"></div>
<div class="a" style="left:1778px;top:960px;width:1px;height:25px;background:#D4D4D4;"></div>
<div class="a" style="left:37px;top:985px;width:1861px;height:1px;background:#A9D08E;"></div>
<div class="a" style="left:37px;top:986px;width:1861px;height:25px;background:#E2EFDA;"></div>
<div class="a" style="left:37px;top:1011px;width:1861px;height:1px;background:#A9D08E;"></div>
<div class="a" style="left:137px;top:1012px;width:1px;height:25px;background:#D4D4D4;"></div>
<div class="a" style="left:283px;top:1012px;width:1px;height:25px;background:#D4D4D4;"></div>
<div class="a" style="left:452px;top:1012px;width:1px;height:25px;background:#D4D4D4;"></div>
<div class="a" style="left:602px;top:1012px;width:1px;height:25px;background:#D4D4D4;"></div>
<div class="a" style="left:809px;top:1012px;width:1px;height:25px;background:#D4D4D4;"></div>
<div class="a" style="left:961px;top:1012px;width:1px;height:25px;background:#D4D4D4;"></div>
<div class="a" style="left:1156px;top:1012px;width:1px;height:25px;background:#D4D4D4;"></div>
<div class="a" style="left:1593px;top:1012px;width:1px;height:25px;background:#D4D4D4;"></div>
<div class="a" style="left:1778px;top:1012px;width:1px;height:25px;background:#D4D4D4;"></div>
<div class="a" style="left:37px;top:1037px;width:1861px;height:1px;background:#A9D08E;"></div>
<div class="a" style="left:37px;top:257px;width:1861px;height:1px;background:#A9D08E;"></div>
<div class="a" style="left:1898px;top:231px;width:1px;height:783px;background:#9B9B9B;"></div>
<div class="a" style="left:120px;top:239px;width:17px;height:17px;background:linear-gradient(#FFFFFF,#F4F4F4 60%,#E4E4E4);border:1px solid #B7B7B7;border-top-color:#D0D0D0;border-left-color:#D0D0D0;"></div>
<svg class="a" style="left:125px;top:246px;" width="8" height="5" viewBox="0 0 8 5"><path d="M0 0.3 H7.4 L3.7 4.2 Z" fill="#5A5A5A"/></svg>
<div class="a" style="left:266px;top:239px;width:17px;height:17px;background:linear-gradient(#FFFFFF,#F4F4F4 60%,#E4E4E4);border:1px solid #B7B7B7;border-top-color:#D0D0D0;border-left-color:#D0D0D0;"></div>
<svg class="a" style="left:271px;top:246px;" width="8" height="5" viewBox="0 0 8 5"><path d="M0 0.3 H7.4 L3.7 4.2 Z" fill="#5A5A5A"/></svg>
<div class="a" style="left:435px;top:239px;width:17px;height:17px;background:linear-gradient(#FFFFFF,#F4F4F4 60%,#E4E4E4);border:1px solid #B7B7B7;border-top-color:#D0D0D0;border-left-color:#D0D0D0;"></div>
<svg class="a" style="left:440px;top:246px;" width="8" height="5" viewBox="0 0 8 5"><path d="M0 0.3 H7.4 L3.7 4.2 Z" fill="#5A5A5A"/></svg>
<div class="a" style="left:585px;top:239px;width:17px;height:17px;background:linear-gradient(#FFFFFF,#F4F4F4 60%,#E4E4E4);border:1px solid #B7B7B7;border-top-color:#D0D0D0;border-left-color:#D0D0D0;"></div>
<svg class="a" style="left:590px;top:246px;" width="8" height="5" viewBox="0 0 8 5"><path d="M0 0.3 H7.4 L3.7 4.2 Z" fill="#5A5A5A"/></svg>
<div class="a" style="left:792px;top:239px;width:17px;height:17px;background:linear-gradient(#FFFFFF,#F4F4F4 60%,#E4E4E4);border:1px solid #B7B7B7;border-top-color:#D0D0D0;border-left-color:#D0D0D0;"></div>
<svg class="a" style="left:797px;top:246px;" width="8" height="5" viewBox="0 0 8 5"><path d="M0 0.3 H7.4 L3.7 4.2 Z" fill="#5A5A5A"/></svg>
<div class="a" style="left:944px;top:239px;width:17px;height:17px;background:linear-gradient(#FFFFFF,#F4F4F4 60%,#E4E4E4);border:1px solid #B7B7B7;border-top-color:#D0D0D0;border-left-color:#D0D0D0;"></div>
<svg class="a" style="left:949px;top:246px;" width="8" height="5" viewBox="0 0 8 5"><path d="M0 0.3 H7.4 L3.7 4.2 Z" fill="#5A5A5A"/></svg>
<div class="a" style="left:1139px;top:239px;width:17px;height:17px;background:linear-gradient(#FFFFFF,#F4F4F4 60%,#E4E4E4);border:1px solid #B7B7B7;border-top-color:#D0D0D0;border-left-color:#D0D0D0;"></div>
<svg class="a" style="left:1144px;top:246px;" width="8" height="5" viewBox="0 0 8 5"><path d="M0 0.3 H7.4 L3.7 4.2 Z" fill="#5A5A5A"/></svg>
<div class="a" style="left:1576px;top:239px;width:17px;height:17px;background:linear-gradient(#FFFFFF,#F4F4F4 60%,#E4E4E4);border:1px solid #B7B7B7;border-top-color:#D0D0D0;border-left-color:#D0D0D0;"></div>
<svg class="a" style="left:1581px;top:246px;" width="8" height="5" viewBox="0 0 8 5"><path d="M0 0.3 H7.4 L3.7 4.2 Z" fill="#5A5A5A"/></svg>
<div class="a" style="left:1761px;top:239px;width:17px;height:17px;background:linear-gradient(#FFFFFF,#F4F4F4 60%,#E4E4E4);border:1px solid #B7B7B7;border-top-color:#D0D0D0;border-left-color:#D0D0D0;"></div>
<svg class="a" style="left:1766px;top:246px;" width="8" height="5" viewBox="0 0 8 5"><path d="M0 0.3 H7.4 L3.7 4.2 Z" fill="#5A5A5A"/></svg>
<div class="a" style="left:35px;top:230px;width:104px;height:29px;border:2px solid #217346;"></div>
<div class="a" style="left:37px;top:232px;width:100px;height:25px;border:1px solid rgba(255,255,255,0.85);"></div>
<div class="a" style="left:134px;top:254px;width:6px;height:6px;background:#fff;"></div>
<div class="a" style="left:135px;top:255px;width:5px;height:5px;background:#217346;"></div>
<div class="a" style="left:1899px;top:207px;width:19px;height:807px;background:#E6E6E6;"></div>
<div class="a" style="left:1901px;top:245px;width:17px;height:769px;background:#DADADA;"></div>
<div class="a" style="left:1902px;top:209px;width:15px;height:15px;background:#fff;border:1px solid #CFCFCF;"></div>
<svg class="a" style="left:1906px;top:214px;" width="8" height="5" viewBox="0 0 8 5"><path d="M0 4.4 H7.4 L3.7 0.6 Z" fill="#777"/></svg>
<div class="a" style="left:1902px;top:224px;width:15px;height:21px;background:#fff;border:1px solid #CFCFCF;"></div>
<span class="t" style="left:23.20px;top:8px;line-height:19px;font-size:12px;color:#fff;letter-spacing:-0.343px;-webkit-text-stroke:0.25px #fff;">AutoSave</span>
<span class="t" style="left:98.90px;top:10px;line-height:16px;font-size:10px;color:#fff;letter-spacing:-0.200px;-webkit-text-stroke:0.25px #fff;">Off</span>
<span class="t" style="left:483.70px;top:7px;line-height:19px;font-size:12px;color:#fff;letter-spacing:-0.329px;white-space:pre;-webkit-text-stroke:0.25px #fff;">Book1  -  Excel</span>
<span class="t" style="left:836.60px;top:8px;line-height:19px;font-size:12px;color:#185C37;letter-spacing:-0.920px;">Search</span>
<span class="t" style="left:1604.00px;top:9px;line-height:19px;font-size:12px;color:#fff;letter-spacing:0.173px;-webkit-text-stroke:0.25px #fff;">Mitleider, Anton</span>
<span class="t" style="left:1703.70px;top:8px;line-height:18px;font-size:11px;color:#fff;letter-spacing:-1.400px;">MA</span>
<span class="t" style="left:17.10px;top:39px;line-height:21px;font-size:13px;color:#3B3A39;letter-spacing:-0.867px;">File</span>
<span class="t" style="left:69.10px;top:39px;line-height:21px;font-size:13px;color:#3B3A39;letter-spacing:0.133px;">Home</span>
<span class="t" style="left:132.60px;top:39px;line-height:21px;font-size:13px;color:#3B3A39;letter-spacing:-0.120px;">Insert</span>
<span class="t" style="left:195.80px;top:39px;line-height:21px;font-size:13px;color:#3B3A39;letter-spacing:-0.220px;">Page Layout</span>
<span class="t" style="left:296.40px;top:39px;line-height:21px;font-size:13px;color:#3B3A39;letter-spacing:-0.114px;">Formulas</span>
<span class="t" style="left:378.60px;top:39px;line-height:21px;font-size:13px;color:#3B3A39;letter-spacing:-0.133px;">Data</span>
<span class="t" style="left:434.60px;top:39px;line-height:21px;font-size:13px;color:#3B3A39;letter-spacing:-0.520px;">Review</span>
<span class="t" style="left:503.40px;top:39px;line-height:21px;font-size:13px;color:#3B3A39;letter-spacing:-0.600px;">View</span>
<span class="t" style="left:557.60px;top:39px;line-height:21px;font-size:13px;color:#3B3A39;letter-spacing:0.200px;">Help</span>
<span class="t" style="left:614.60px;top:39px;line-height:21px;font-size:13px;color:#3B3A39;letter-spacing:0.067px;">Acrobat</span>
<span class="t" style="left:688.30px;top:39px;line-height:21px;font-size:13px;color:#217346;-webkit-text-stroke:0.45px #217346;">Table Design</span>
<span class="t" style="left:791.70px;top:39px;line-height:21px;font-size:13px;color:#217346;letter-spacing:-0.250px;">Query</span>
<span class="t" style="left:1756.00px;top:39px;line-height:21px;font-size:13px;color:#217346;letter-spacing:-0.300px;-webkit-text-stroke:0.45px #217346;">Share</span>
<span class="t" style="left:1832.00px;top:39px;line-height:21px;font-size:13px;color:#217346;letter-spacing:0.400px;-webkit-text-stroke:0.45px #217346;">Comments</span>
<span class="t" style="left:8.20px;top:71px;line-height:19px;font-size:12px;color:#3B3A39;letter-spacing:-0.300px;">Table Name:</span>
<span class="t" style="left:11.00px;top:95px;line-height:19px;font-size:12px;color:#111;letter-spacing:-0.333px;">test</span>
<span class="t" style="left:29.60px;top:119px;line-height:19px;font-size:12px;color:#3B3A39;letter-spacing:-0.564px;">Resize Table</span>
<span class="t" style="left:26.80px;top:143px;line-height:19px;font-size:12px;color:#3B3A39;letter-spacing:-0.356px;">Properties</span>
<span class="t" style="left:137.00px;top:71px;line-height:19px;font-size:12px;color:#3B3A39;letter-spacing:-0.083px;">Summarize with PivotTable</span>
<span class="t" style="left:137.00px;top:95px;line-height:19px;font-size:12px;color:#3B3A39;letter-spacing:-0.188px;">Remove Duplicates</span>
<span class="t" style="left:137.00px;top:119px;line-height:19px;font-size:12px;color:#3B3A39;letter-spacing:-0.133px;">Convert to Range</span>
<span class="t" style="left:291.60px;top:104px;line-height:19px;font-size:12px;color:#3B3A39;letter-spacing:-0.160px;">Insert</span>
<span class="t" style="left:293.00px;top:120px;line-height:19px;font-size:12px;color:#3B3A39;letter-spacing:-0.400px;">Slicer</span>
<span class="t" style="left:207.00px;top:143px;line-height:19px;font-size:12px;color:#3B3A39;letter-spacing:-0.400px;">Tools</span>
<span class="t" style="left:347.70px;top:104px;line-height:19px;font-size:12px;color:#3B3A39;letter-spacing:-0.160px;">Export</span>
<span class="t" style="left:387.60px;top:104px;line-height:19px;font-size:12px;color:#3B3A39;letter-spacing:-0.433px;">Refresh</span>
<span class="t" style="left:451.80px;top:71px;line-height:19px;font-size:12px;color:#3B3A39;letter-spacing:-0.156px;">Properties</span>
<span class="t" style="left:452.20px;top:95px;line-height:19px;font-size:12px;color:#A9A7A5;letter-spacing:-0.186px;">Open in Browser</span>
<span class="t" style="left:452.40px;top:119px;line-height:19px;font-size:12px;color:#3B3A39;letter-spacing:-0.080px;">Unlink</span>
<span class="t" style="left:394.60px;top:143px;line-height:19px;font-size:12px;color:#3B3A39;letter-spacing:-0.367px;">External Table Data</span>
<span class="t" style="left:583.20px;top:70px;line-height:19px;font-size:12px;color:#3B3A39;letter-spacing:-0.422px;">Header Row</span>
<span class="t" style="left:584.20px;top:93px;line-height:19px;font-size:12px;color:#3B3A39;letter-spacing:-0.475px;">Total Row</span>
<span class="t" style="left:583.20px;top:116px;line-height:19px;font-size:12px;color:#3B3A39;letter-spacing:-0.380px;">Banded Rows</span>
<span class="t" style="left:681.80px;top:70px;line-height:19px;font-size:12px;color:#3B3A39;letter-spacing:0.073px;">First Column</span>
<span class="t" style="left:681.80px;top:93px;line-height:19px;font-size:12px;color:#3B3A39;letter-spacing:-0.020px;">Last Column</span>
<span class="t" style="left:681.80px;top:116px;line-height:19px;font-size:12px;color:#3B3A39;letter-spacing:-0.092px;">Banded Columns</span>
<span class="t" style="left:800.80px;top:70px;line-height:19px;font-size:12px;color:#3B3A39;letter-spacing:0.067px;">Filter Button</span>
<span class="t" style="left:667.00px;top:143px;line-height:19px;font-size:12px;color:#3B3A39;letter-spacing:-0.222px;">Table Style Options</span>
<span class="t" style="left:1111.00px;top:143px;line-height:19px;font-size:12px;color:#3B3A39;letter-spacing:-0.582px;">Table Styles</span>
<span class="t" style="left:12.50px;top:174px;line-height:21px;font-size:13px;color:#444;letter-spacing:-0.800px;">A1</span>
<span class="t" style="left:222.60px;top:173px;line-height:22px;font-size:14px;color:#555;font-weight:700;font-family:&quot;Liberation Serif&quot;,serif;font-style:italic;">f</span>
<span class="t" style="left:227.60px;top:178px;line-height:16px;font-size:10px;color:#555;font-weight:700;font-family:&quot;Liberation Serif&quot;,serif;font-style:italic;">x</span>
<span class="t" style="left:81.80px;top:206px;line-height:26px;font-size:16.2px;color:#217346;">A</span>
<span class="t" style="left:205.30px;top:206px;line-height:26px;font-size:16.2px;color:#1A1A1A;">B</span>
<span class="t" style="left:362.80px;top:206px;line-height:26px;font-size:16.2px;color:#1A1A1A;">C</span>
<span class="t" style="left:521.80px;top:206px;line-height:26px;font-size:16.2px;color:#1A1A1A;">D</span>
<span class="t" style="left:700.30px;top:206px;line-height:26px;font-size:16.2px;color:#1A1A1A;">E</span>
<span class="t" style="left:880.30px;top:206px;line-height:26px;font-size:16.2px;color:#1A1A1A;">F</span>
<span class="t" style="left:1053.30px;top:206px;line-height:26px;font-size:16.2px;color:#1A1A1A;">G</span>
<span class="t" style="left:1369.30px;top:206px;line-height:26px;font-size:16.2px;color:#1A1A1A;">H</span>
<span class="t" style="left:1684.30px;top:206px;line-height:26px;font-size:16.2px;color:#1A1A1A;">I</span>
<span class="t" style="left:1886.30px;top:206px;line-height:26px;font-size:16.2px;color:#1A1A1A;">J</span>
<span class="t" style="left:13.50px;top:232px;line-height:26px;font-size:16.2px;color:#217346;">1</span>
<span class="t" style="left:14.00px;top:258px;line-height:26px;font-size:16.2px;color:#1A1A1A;">2</span>
<span class="t" style="left:14.00px;top:284px;line-height:26px;font-size:16.2px;color:#1A1A1A;">3</span>
<span class="t" style="left:14.00px;top:310px;line-height:26px;font-size:16.2px;color:#1A1A1A;">4</span>
<span class="t" style="left:13.50px;top:336px;line-height:26px;font-size:16.2px;color:#1A1A1A;">5</span>
<span class="t" style="left:14.00px;top:362px;line-height:26px;font-size:16.2px;color:#1A1A1A;">6</span>
<span class="t" style="left:14.00px;top:388px;line-height:26px;font-size:16.2px;color:#1A1A1A;">7</span>
<span class="t" style="left:14.00px;top:414px;line-height:26px;font-size:16.2px;color:#1A1A1A;">8</span>
<span class="t" style="left:14.00px;top:440px;line-height:26px;font-size:16.2px;color:#1A1A1A;">9</span>
<span class="t" style="left:9.00px;top:466px;line-height:26px;font-size:16.2px;color:#1A1A1A;">10</span>
<span class="t" style="left:10.00px;top:492px;line-height:26px;font-size:16.2px;color:#1A1A1A;">11</span>
<span class="t" style="left:9.00px;top:518px;line-height:26px;font-size:16.2px;color:#1A1A1A;">12</span>
<span class="t" style="left:9.00px;top:544px;line-height:26px;font-size:16.2px;color:#1A1A1A;">13</span>
<span class="t" style="left:9.00px;top:570px;line-height:26px;font-size:16.2px;color:#1A1A1A;">14</span>
<span class="t" style="left:9.00px;top:596px;line-height:26px;font-size:16.2px;color:#1A1A1A;">15</span>
<span class="t" style="left:9.00px;top:622px;line-height:26px;font-size:16.2px;color:#1A1A1A;">16</span>
<span class="t" style="left:9.00px;top:648px;line-height:26px;font-size:16.2px;color:#1A1A1A;">17</span>
<span class="t" style="left:9.00px;top:674px;line-height:26px;font-size:16.2px;color:#1A1A1A;">18</span>
<span class="t" style="left:9.00px;top:700px;line-height:26px;font-size:16.2px;color:#1A1A1A;">19</span>
<span class="t" style="left:9.50px;top:726px;line-height:26px;font-size:16.2px;color:#1A1A1A;">20</span>
<span class="t" style="left:9.50px;top:752px;line-height:26px;font-size:16.2px;color:#1A1A1A;">21</span>
<span class="t" style="left:9.50px;top:778px;line-height:26px;font-size:16.2px;color:#1A1A1A;">22</span>
<span class="t" style="left:9.50px;top:804px;line-height:26px;font-size:16.2px;color:#1A1A1A;">23</span>
<span class="t" style="left:9.50px;top:830px;line-height:26px;font-size:16.2px;color:#1A1A1A;">24</span>
<span class="t" style="left:9.50px;top:856px;line-height:26px;font-size:16.2px;color:#1A1A1A;">25</span>
<span class="t" style="left:9.50px;top:882px;line-height:26px;font-size:16.2px;color:#1A1A1A;">26</span>
<span class="t" style="left:9.50px;top:908px;line-height:26px;font-size:16.2px;color:#1A1A1A;">27</span>
<span class="t" style="left:9.50px;top:934px;line-height:26px;font-size:16.2px;color:#1A1A1A;">28</span>
<span class="t" style="left:9.50px;top:960px;line-height:26px;font-size:16.2px;color:#1A1A1A;">29</span>
<span class="t" style="left:9.50px;top:986px;line-height:26px;font-size:16.2px;color:#1A1A1A;">30</span>
<span class="t" style="left:40.50px;top:232px;line-height:26px;font-size:16.2px;color:#fff;font-weight:700;letter-spacing:-0.033px;">Column1</span>
<span class="t" style="left:141.20px;top:232px;line-height:26px;font-size:16.2px;color:#fff;font-weight:700;letter-spacing:-0.033px;">Column2</span>
<span class="t" style="left:287.30px;top:232px;line-height:26px;font-size:16.2px;color:#fff;font-weight:700;letter-spacing:-0.133px;">Column3</span>
<span class="t" style="left:456.10px;top:232px;line-height:26px;font-size:16.2px;color:#fff;font-weight:700;letter-spacing:-0.167px;">Column4</span>
<span class="t" style="left:606.00px;top:232px;line-height:26px;font-size:16.2px;color:#fff;font-weight:700;">Column5</span>
<span class="t" style="left:813.40px;top:232px;line-height:26px;font-size:16.2px;color:#fff;font-weight:700;letter-spacing:-0.033px;">Column6</span>
<span class="t" style="left:965.60px;top:232px;line-height:26px;font-size:16.2px;color:#fff;font-weight:700;letter-spacing:-0.067px;">Column7</span>
<span class="t" style="left:1160.30px;top:232px;line-height:26px;font-size:16.2px;color:#fff;font-weight:700;letter-spacing:-0.033px;">Column8</span>
<span class="t" style="left:1597.00px;top:232px;line-height:26px;font-size:16.2px;color:#fff;font-weight:700;letter-spacing:0.133px;">Column9</span>
<span class="t" style="left:1782.20px;top:232px;line-height:26px;font-size:16.2px;color:#fff;font-weight:700;letter-spacing:0.143px;">Column10</span>
<span class="t" style="left:40.40px;top:258px;line-height:26px;font-size:16.2px;color:#000;letter-spacing:0.457px;">Username</span>
<span class="t" style="left:141.80px;top:258px;line-height:26px;font-size:16.2px;color:#000;letter-spacing:0.462px;">Activation Status</span>
<span class="t" style="left:287.90px;top:258px;line-height:26px;font-size:16.2px;color:#000;letter-spacing:0.480px;">Advisor Assigned</span>
<span class="t" style="left:456.70px;top:258px;line-height:26px;font-size:16.2px;color:#000;letter-spacing:0.693px;">Workspace-Profil</span>
<span class="t" style="left:606.60px;top:258px;line-height:26px;font-size:16.2px;color:#000;letter-spacing:0.648px;">Workspace-Profil (Web)</span>
<span class="t" style="left:813.00px;top:258px;line-height:26px;font-size:16.2px;color:#000;letter-spacing:0.600px;">Einstellungsprofil</span>
<span class="t" style="left:965.60px;top:258px;line-height:26px;font-size:16.2px;color:#000;letter-spacing:0.182px;">System-Rolle</span>
<span class="t" style="left:1160.30px;top:258px;line-height:26px;font-size:16.2px;color:#000;letter-spacing:0.421px;">Sytem-Rolle - Activated rights</span>
<span class="t" style="left:1597.00px;top:258px;line-height:26px;font-size:16.2px;color:#000;letter-spacing:0.518px;">Zonen-Berechtigung</span>
<span class="t" style="left:1782.20px;top:258px;line-height:26px;font-size:16.2px;color:#000;letter-spacing:0.518px;width:115.80px;overflow:hidden;">Zonen-Berechtigung</span>
<span class="t" style="left:40.50px;top:284px;line-height:26px;font-size:16.2px;color:#000;letter-spacing:0.733px;">Demo</span>
<span class="t" style="left:141.90px;top:284px;line-height:26px;font-size:16.2px;color:#000;letter-spacing:0.400px;">active</span>
<span class="t" style="left:287.00px;top:284px;line-height:26px;font-size:16.2px;color:#000;letter-spacing:0.389px;">no advisor assigned</span>
<span class="t" style="left:456.80px;top:284px;line-height:26px;font-size:16.2px;color:#000;letter-spacing:0.450px;">&lt;default&gt;</span>
<span class="t" style="left:606.80px;top:284px;line-height:26px;font-size:16.2px;color:#000;letter-spacing:0.450px;">&lt;default&gt;</span>
<span class="t" style="left:813.80px;top:284px;line-height:26px;font-size:16.2px;color:#000;letter-spacing:0.450px;">&lt;default&gt;</span>
<span class="t" style="left:965.30px;top:284px;line-height:26px;font-size:16.2px;color:#000;letter-spacing:0.227px;">Full access system role</span>
<span class="t" style="left:1160.30px;top:284px;line-height:26px;font-size:16.2px;color:#000;letter-spacing:0.539px;">Configure risk-free interest rates</span>
<span class="t" style="left:40.50px;top:310px;line-height:26px;font-size:16.2px;color:#000;letter-spacing:0.733px;">Demo</span>
<span class="t" style="left:141.90px;top:310px;line-height:26px;font-size:16.2px;color:#000;letter-spacing:0.400px;">active</span>
<span class="t" style="left:287.00px;top:310px;line-height:26px;font-size:16.2px;color:#000;letter-spacing:0.389px;">no advisor assigned</span>
<span class="t" style="left:456.80px;top:310px;line-height:26px;font-size:16.2px;color:#000;letter-spacing:0.450px;">&lt;default&gt;</span>
<span class="t" style="left:606.80px;top:310px;line-height:26px;font-size:16.2px;color:#000;letter-spacing:0.450px;">&lt;default&gt;</span>
<span class="t" style="left:813.80px;top:310px;line-height:26px;font-size:16.2px;color:#000;letter-spacing:0.450px;">&lt;default&gt;</span>
<span class="t" style="left:965.30px;top:310px;line-height:26px;font-size:16.2px;color:#000;letter-spacing:0.227px;">Full access system role</span>
<span class="t" style="left:1159.30px;top:310px;line-height:26px;font-size:16.2px;color:#000;letter-spacing:0.492px;">Manage commission schemes</span>
<span class="t" style="left:40.50px;top:336px;line-height:26px;font-size:16.2px;color:#000;letter-spacing:0.733px;">Demo</span>
<span class="t" style="left:141.90px;top:336px;line-height:26px;font-size:16.2px;color:#000;letter-spacing:0.400px;">active</span>
<span class="t" style="left:287.00px;top:336px;line-height:26px;font-size:16.2px;color:#000;letter-spacing:0.389px;">no advisor assigned</span>
<span class="t" style="left:456.80px;top:336px;line-height:26px;font-size:16.2px;color:#000;letter-spacing:0.450px;">&lt;default&gt;</span>
<span class="t" style="left:606.80px;top:336px;line-height:26px;font-size:16.2px;color:#000;letter-spacing:0.450px;">&lt;default&gt;</span>
<span class="t" style="left:813.80px;top:336px;line-height:26px;font-size:16.2px;color:#000;letter-spacing:0.450px;">&lt;default&gt;</span>
<span class="t" style="left:965.30px;top:336px;line-height:26px;font-size:16.2px;color:#000;letter-spacing:0.227px;">Full access system role</span>
<span class="t" style="left:1159.30px;top:336px;line-height:26px;font-size:16.2px;color:#000;letter-spacing:0.500px;">Record depositories</span>
<span class="t" style="left:40.50px;top:362px;line-height:26px;font-size:16.2px;color:#000;letter-spacing:0.733px;">Demo</span>
<span class="t" style="left:141.90px;top:362px;line-height:26px;font-size:16.2px;color:#000;letter-spacing:0.400px;">active</span>
<span class="t" style="left:287.00px;top:362px;line-height:26px;font-size:16.2px;color:#000;letter-spacing:0.389px;">no advisor assigned</span>
<span class="t" style="left:456.80px;top:362px;line-height:26px;font-size:16.2px;color:#000;letter-spacing:0.450px;">&lt;default&gt;</span>
<span class="t" style="left:606.80px;top:362px;line-height:26px;font-size:16.2px;color:#000;letter-spacing:0.450px;">&lt;default&gt;</span>
<span class="t" style="left:813.80px;top:362px;line-height:26px;font-size:16.2px;color:#000;letter-spacing:0.450px;">&lt;default&gt;</span>
<span class="t" style="left:965.30px;top:362px;line-height:26px;font-size:16.2px;color:#000;letter-spacing:0.227px;">Full access system role</span>
<span class="t" style="left:1160.30px;top:362px;line-height:26px;font-size:16.2px;color:#000;letter-spacing:0.529px;">Configure user-defined fields</span>
<span class="t" style="left:40.50px;top:388px;line-height:26px;font-size:16.2px;color:#000;letter-spacing:0.733px;">Demo</span>
<span class="t" style="left:141.90px;top:388px;line-height:26px;font-size:16.2px;color:#000;letter-spacing:0.400px;">active</span>
<span class="t" style="left:287.00px;top:388px;line-height:26px;font-size:16.2px;color:#000;letter-spacing:0.389px;">no advisor assigned</span>
<span class="t" style="left:456.80px;top:388px;line-height:26px;font-size:16.2px;color:#000;letter-spacing:0.450px;">&lt;default&gt;</span>
<span class="t" style="left:606.80px;top:388px;line-height:26px;font-size:16.2px;color:#000;letter-spacing:0.450px;">&lt;default&gt;</span>
<span class="t" style="left:813.80px;top:388px;line-height:26px;font-size:16.2px;color:#000;letter-spacing:0.450px;">&lt;default&gt;</span>
<span class="t" style="left:965.30px;top:388px;line-height:26px;font-size:16.2px;color:#000;letter-spacing:0.227px;">Full access system role</span>
<span class="t" style="left:1159.30px;top:388px;line-height:26px;font-size:16.2px;color:#000;letter-spacing:0.467px;">Use batch transactions</span>
<span class="t" style="left:40.50px;top:414px;line-height:26px;font-size:16.2px;color:#000;letter-spacing:0.733px;">Demo</span>
<span class="t" style="left:141.90px;top:414px;line-height:26px;font-size:16.2px;color:#000;letter-spacing:0.400px;">active</span>
<span class="t" style="left:287.00px;top:414px;line-height:26px;font-size:16.2px;color:#000;letter-spacing:0.389px;">no advisor assigned</span>
<span class="t" style="left:456.80px;top:414px;line-height:26px;font-size:16.2px;color:#000;letter-spacing:0.450px;">&lt;default&gt;</span>
<span class="t" style="left:606.80px;top:414px;line-height:26px;font-size:16.2px;color:#000;letter-spacing:0.450px;">&lt;default&gt;</span>
<span class="t" style="left:813.80px;top:414px;line-height:26px;font-size:16.2px;color:#000;letter-spacing:0.450px;">&lt;default&gt;</span>
<span class="t" style="left:965.30px;top:414px;line-height:26px;font-size:16.2px;color:#000;letter-spacing:0.227px;">Full access system role</span>
<span class="t" style="left:1160.30px;top:414px;line-height:26px;font-size:16.2px;color:#000;letter-spacing:0.312px;">Create, change and delete asset assignment models</span>
<span class="t" style="left:40.50px;top:440px;line-height:26px;font-size:16.2px;color:#000;letter-spacing:0.733px;">Demo</span>
<span class="t" style="left:141.90px;top:440px;line-height:26px;font-size:16.2px;color:#000;letter-spacing:0.400px;">active</span>
<span class="t" style="left:287.00px;top:440px;line-height:26px;font-size:16.2px;color:#000;letter-spacing:0.389px;">no advisor assigned</span>
<span class="t" style="left:456.80px;top:440px;line-height:26px;font-size:16.2px;color:#000;letter-spacing:0.450px;">&lt;default&gt;</span>
<span class="t" style="left:606.80px;top:440px;line-height:26px;font-size:16.2px;color:#000;letter-spacing:0.450px;">&lt;default&gt;</span>
<span class="t" style="left:813.80px;top:440px;line-height:26px;font-size:16.2px;color:#000;letter-spacing:0.450px;">&lt;default&gt;</span>
<span class="t" style="left:965.30px;top:440px;line-height:26px;font-size:16.2px;color:#000;letter-spacing:0.227px;">Full access system role</span>
<span class="t" style="left:1160.30px;top:440px;line-height:26px;font-size:16.2px;color:#000;letter-spacing:0.430px;">Create, change and delete position restrictions</span>
<span class="t" style="left:40.50px;top:466px;line-height:26px;font-size:16.2px;color:#000;letter-spacing:0.733px;">Demo</span>
<span class="t" style="left:141.90px;top:466px;line-height:26px;font-size:16.2px;color:#000;letter-spacing:0.400px;">active</span>
<span class="t" style="left:287.00px;top:466px;line-height:26px;font-size:16.2px;color:#000;letter-spacing:0.389px;">no advisor assigned</span>
<span class="t" style="left:456.80px;top:466px;line-height:26px;font-size:16.2px;color:#000;letter-spacing:0.450px;">&lt;default&gt;</span>
<span class="t" style="left:606.80px;top:466px;line-height:26px;font-size:16.2px;color:#000;letter-spacing:0.450px;">&lt;default&gt;</span>
<span class="t" style="left:813.80px;top:466px;line-height:26px;font-size:16.2px;color:#000;letter-spacing:0.450px;">&lt;default&gt;</span>
<span class="t" style="left:965.30px;top:466px;line-height:26px;font-size:16.2px;color:#000;letter-spacing:0.227px;">Full access system role</span>
<span class="t" style="left:1159.30px;top:466px;line-height:26px;font-size:16.2px;color:#000;letter-spacing:0.315px;">Use Crystal Report Designer</span>
<span class="t" style="left:40.50px;top:492px;line-height:26px;font-size:16.2px;color:#000;letter-spacing:0.733px;">Demo</span>
<span class="t" style="left:141.90px;top:492px;line-height:26px;font-size:16.2px;color:#000;letter-spacing:0.400px;">active</span>
<span class="t" style="left:287.00px;top:492px;line-height:26px;font-size:16.2px;color:#000;letter-spacing:0.389px;">no advisor assigned</span>
<span class="t" style="left:456.80px;top:492px;line-height:26px;font-size:16.2px;color:#000;letter-spacing:0.450px;">&lt;default&gt;</span>
<span class="t" style="left:606.80px;top:492px;line-height:26px;font-size:16.2px;color:#000;letter-spacing:0.450px;">&lt;default&gt;</span>
<span class="t" style="left:813.80px;top:492px;line-height:26px;font-size:16.2px;color:#000;letter-spacing:0.450px;">&lt;default&gt;</span>
<span class="t" style="left:965.30px;top:492px;line-height:26px;font-size:16.2px;color:#000;letter-spacing:0.227px;">Full access system role</span>
<span class="t" style="left:1159.30px;top:492px;line-height:26px;font-size:16.2px;color:#000;letter-spacing:0.592px;">Use report folder designer</span>
<span class="t" style="left:40.50px;top:518px;line-height:26px;font-size:16.2px;color:#000;letter-spacing:0.733px;">Demo</span>
<span class="t" style="left:141.90px;top:518px;line-height:26px;font-size:16.2px;color:#000;letter-spacing:0.400px;">active</span>
<span class="t" style="left:287.00px;top:518px;line-height:26px;font-size:16.2px;color:#000;letter-spacing:0.389px;">no advisor assigned</span>
<span class="t" style="left:456.80px;top:518px;line-height:26px;font-size:16.2px;color:#000;letter-spacing:0.450px;">&lt;default&gt;</span>
<span class="t" style="left:606.80px;top:518px;line-height:26px;font-size:16.2px;color:#000;letter-spacing:0.450px;">&lt;default&gt;</span>
<span class="t" style="left:813.80px;top:518px;line-height:26px;font-size:16.2px;color:#000;letter-spacing:0.450px;">&lt;default&gt;</span>
<span class="t" style="left:965.30px;top:518px;line-height:26px;font-size:16.2px;color:#000;letter-spacing:0.227px;">Full access system role</span>
<span class="t" style="left:1159.30px;top:518px;line-height:26px;font-size:16.2px;color:#000;letter-spacing:0.400px;">Use Clipboard</span>
<span class="t" style="left:40.50px;top:544px;line-height:26px;font-size:16.2px;color:#000;letter-spacing:0.733px;">Demo</span>
<span class="t" style="left:141.90px;top:544px;line-height:26px;font-size:16.2px;color:#000;letter-spacing:0.400px;">active</span>
<span class="t" style="left:287.00px;top:544px;line-height:26px;font-size:16.2px;color:#000;letter-spacing:0.389px;">no advisor assigned</span>
<span class="t" style="left:456.80px;top:544px;line-height:26px;font-size:16.2px;color:#000;letter-spacing:0.450px;">&lt;default&gt;</span>
<span class="t" style="left:606.80px;top:544px;line-height:26px;font-size:16.2px;color:#000;letter-spacing:0.450px;">&lt;default&gt;</span>
<span class="t" style="left:813.80px;top:544px;line-height:26px;font-size:16.2px;color:#000;letter-spacing:0.450px;">&lt;default&gt;</span>
<span class="t" style="left:965.30px;top:544px;line-height:26px;font-size:16.2px;color:#000;letter-spacing:0.227px;">Full access system role</span>
<span class="t" style="left:1159.30px;top:544px;line-height:26px;font-size:16.2px;color:#000;letter-spacing:0.490px;">Use price data export</span>
<span class="t" style="left:40.50px;top:570px;line-height:26px;font-size:16.2px;color:#000;letter-spacing:0.733px;">Demo</span>
<span class="t" style="left:141.90px;top:570px;line-height:26px;font-size:16.2px;color:#000;letter-spacing:0.400px;">active</span>
<span class="t" style="left:287.00px;top:570px;line-height:26px;font-size:16.2px;color:#000;letter-spacing:0.389px;">no advisor assigned</span>
<span class="t" style="left:456.80px;top:570px;line-height:26px;font-size:16.2px;color:#000;letter-spacing:0.450px;">&lt;default&gt;</span>
<span class="t" style="left:606.80px;top:570px;line-height:26px;font-size:16.2px;color:#000;letter-spacing:0.450px;">&lt;default&gt;</span>
<span class="t" style="left:813.80px;top:570px;line-height:26px;font-size:16.2px;color:#000;letter-spacing:0.450px;">&lt;default&gt;</span>
<span class="t" style="left:965.30px;top:570px;line-height:26px;font-size:16.2px;color:#000;letter-spacing:0.227px;">Full access system role</span>
<span class="t" style="left:1159.30px;top:570px;line-height:26px;font-size:16.2px;color:#000;letter-spacing:0.612px;">Use object export</span>
<span class="t" style="left:40.50px;top:596px;line-height:26px;font-size:16.2px;color:#000;letter-spacing:0.733px;">Demo</span>
<span class="t" style="left:141.90px;top:596px;line-height:26px;font-size:16.2px;color:#000;letter-spacing:0.400px;">active</span>
<span class="t" style="left:287.00px;top:596px;line-height:26px;font-size:16.2px;color:#000;letter-spacing:0.389px;">no advisor assigned</span>
<span class="t" style="left:456.80px;top:596px;line-height:26px;font-size:16.2px;color:#000;letter-spacing:0.450px;">&lt;default&gt;</span>
<span class="t" style="left:606.80px;top:596px;line-height:26px;font-size:16.2px;color:#000;letter-spacing:0.450px;">&lt;default&gt;</span>
<span class="t" style="left:813.80px;top:596px;line-height:26px;font-size:16.2px;color:#000;letter-spacing:0.450px;">&lt;default&gt;</span>
<span class="t" style="left:965.30px;top:596px;line-height:26px;font-size:16.2px;color:#000;letter-spacing:0.227px;">Full access system role</span>
<span class="t" style="left:1159.30px;top:596px;line-height:26px;font-size:16.2px;color:#000;letter-spacing:0.950px;">Print</span>
<span class="t" style="left:40.50px;top:622px;line-height:26px;font-size:16.2px;color:#000;letter-spacing:0.733px;">Demo</span>
<span class="t" style="left:141.90px;top:622px;line-height:26px;font-size:16.2px;color:#000;letter-spacing:0.400px;">active</span>
<span class="t" style="left:287.00px;top:622px;line-height:26px;font-size:16.2px;color:#000;letter-spacing:0.389px;">no advisor assigned</span>
<span class="t" style="left:456.80px;top:622px;line-height:26px;font-size:16.2px;color:#000;letter-spacing:0.450px;">&lt;default&gt;</span>
<span class="t" style="left:606.80px;top:622px;line-height:26px;font-size:16.2px;color:#000;letter-spacing:0.450px;">&lt;default&gt;</span>
<span class="t" style="left:813.80px;top:622px;line-height:26px;font-size:16.2px;color:#000;letter-spacing:0.450px;">&lt;default&gt;</span>
<span class="t" style="left:965.30px;top:622px;line-height:26px;font-size:16.2px;color:#000;letter-spacing:0.227px;">Full access system role</span>
<span class="t" style="left:1159.30px;top:622px;line-height:26px;font-size:16.2px;color:#000;letter-spacing:0.400px;">Use Crystal export</span>
<span class="t" style="left:40.50px;top:648px;line-height:26px;font-size:16.2px;color:#000;letter-spacing:0.733px;">Demo</span>
<span class="t" style="left:141.90px;top:648px;line-height:26px;font-size:16.2px;color:#000;letter-spacing:0.400px;">active</span>
<span class="t" style="left:287.00px;top:648px;line-height:26px;font-size:16.2px;color:#000;letter-spacing:0.389px;">no advisor assigned</span>
<span class="t" style="left:456.80px;top:648px;line-height:26px;font-size:16.2px;color:#000;letter-spacing:0.450px;">&lt;default&gt;</span>
<span class="t" style="left:606.80px;top:648px;line-height:26px;font-size:16.2px;color:#000;letter-spacing:0.450px;">&lt;default&gt;</span>
<span class="t" style="left:813.80px;top:648px;line-height:26px;font-size:16.2px;color:#000;letter-spacing:0.450px;">&lt;default&gt;</span>
<span class="t" style="left:965.30px;top:648px;line-height:26px;font-size:16.2px;color:#000;letter-spacing:0.227px;">Full access system role</span>
<span class="t" style="left:1159.30px;top:648px;line-height:26px;font-size:16.2px;color:#000;letter-spacing:0.507px;">Use batch export</span>
<span class="t" style="left:40.50px;top:674px;line-height:26px;font-size:16.2px;color:#000;letter-spacing:0.733px;">Demo</span>
<span class="t" style="left:141.90px;top:674px;line-height:26px;font-size:16.2px;color:#000;letter-spacing:0.400px;">active</span>
<span class="t" style="left:287.00px;top:674px;line-height:26px;font-size:16.2px;color:#000;letter-spacing:0.389px;">no advisor assigned</span>
<span class="t" style="left:456.80px;top:674px;line-height:26px;font-size:16.2px;color:#000;letter-spacing:0.450px;">&lt;default&gt;</span>
<span class="t" style="left:606.80px;top:674px;line-height:26px;font-size:16.2px;color:#000;letter-spacing:0.450px;">&lt;default&gt;</span>
<span class="t" style="left:813.80px;top:674px;line-height:26px;font-size:16.2px;color:#000;letter-spacing:0.450px;">&lt;default&gt;</span>
<span class="t" style="left:965.30px;top:674px;line-height:26px;font-size:16.2px;color:#000;letter-spacing:0.227px;">Full access system role</span>
<span class="t" style="left:1159.30px;top:674px;line-height:26px;font-size:16.2px;color:#000;letter-spacing:0.489px;">Manage yield curves</span>
<span class="t" style="left:40.50px;top:700px;line-height:26px;font-size:16.2px;color:#000;letter-spacing:0.733px;">Demo</span>
<span class="t" style="left:141.90px;top:700px;line-height:26px;font-size:16.2px;color:#000;letter-spacing:0.400px;">active</span>
<span class="t" style="left:287.00px;top:700px;line-height:26px;font-size:16.2px;color:#000;letter-spacing:0.389px;">no advisor assigned</span>
<span class="t" style="left:456.80px;top:700px;line-height:26px;font-size:16.2px;color:#000;letter-spacing:0.450px;">&lt;default&gt;</span>
<span class="t" style="left:606.80px;top:700px;line-height:26px;font-size:16.2px;color:#000;letter-spacing:0.450px;">&lt;default&gt;</span>
<span class="t" style="left:813.80px;top:700px;line-height:26px;font-size:16.2px;color:#000;letter-spacing:0.450px;">&lt;default&gt;</span>
<span class="t" style="left:965.30px;top:700px;line-height:26px;font-size:16.2px;color:#000;letter-spacing:0.227px;">Full access system role</span>
<span class="t" style="left:1160.30px;top:700px;line-height:26px;font-size:16.2px;color:#000;letter-spacing:0.547px;">Configure data retrieval, retrieve and import data</span>
<span class="t" style="left:40.50px;top:726px;line-height:26px;font-size:16.2px;color:#000;letter-spacing:0.733px;">Demo</span>
<span class="t" style="left:141.90px;top:726px;line-height:26px;font-size:16.2px;color:#000;letter-spacing:0.400px;">active</span>
<span class="t" style="left:287.00px;top:726px;line-height:26px;font-size:16.2px;color:#000;letter-spacing:0.389px;">no advisor assigned</span>
<span class="t" style="left:456.80px;top:726px;line-height:26px;font-size:16.2px;color:#000;letter-spacing:0.450px;">&lt;default&gt;</span>
<span class="t" style="left:606.80px;top:726px;line-height:26px;font-size:16.2px;color:#000;letter-spacing:0.450px;">&lt;default&gt;</span>
<span class="t" style="left:813.80px;top:726px;line-height:26px;font-size:16.2px;color:#000;letter-spacing:0.450px;">&lt;default&gt;</span>
<span class="t" style="left:965.30px;top:726px;line-height:26px;font-size:16.2px;color:#000;letter-spacing:0.227px;">Full access system role</span>
<span class="t" style="left:1160.30px;top:726px;line-height:26px;font-size:16.2px;color:#000;letter-spacing:0.516px;">Configure workspaces</span>
<span class="t" style="left:40.50px;top:752px;line-height:26px;font-size:16.2px;color:#000;letter-spacing:0.733px;">Demo</span>
<span class="t" style="left:141.90px;top:752px;line-height:26px;font-size:16.2px;color:#000;letter-spacing:0.400px;">active</span>
<span class="t" style="left:287.00px;top:752px;line-height:26px;font-size:16.2px;color:#000;letter-spacing:0.389px;">no advisor assigned</span>
<span class="t" style="left:456.80px;top:752px;line-height:26px;font-size:16.2px;color:#000;letter-spacing:0.450px;">&lt;default&gt;</span>
<span class="t" style="left:606.80px;top:752px;line-height:26px;font-size:16.2px;color:#000;letter-spacing:0.450px;">&lt;default&gt;</span>
<span class="t" style="left:813.80px;top:752px;line-height:26px;font-size:16.2px;color:#000;letter-spacing:0.450px;">&lt;default&gt;</span>
<span class="t" style="left:965.30px;top:752px;line-height:26px;font-size:16.2px;color:#000;letter-spacing:0.227px;">Full access system role</span>
<span class="t" style="left:1159.30px;top:752px;line-height:26px;font-size:16.2px;color:#000;letter-spacing:0.582px;">Edit workspace profiles</span>
<span class="t" style="left:40.50px;top:778px;line-height:26px;font-size:16.2px;color:#000;letter-spacing:0.733px;">Demo</span>
<span class="t" style="left:141.90px;top:778px;line-height:26px;font-size:16.2px;color:#000;letter-spacing:0.400px;">active</span>
<span class="t" style="left:287.00px;top:778px;line-height:26px;font-size:16.2px;color:#000;letter-spacing:0.389px;">no advisor assigned</span>
<span class="t" style="left:456.80px;top:778px;line-height:26px;font-size:16.2px;color:#000;letter-spacing:0.450px;">&lt;default&gt;</span>
<span class="t" style="left:606.80px;top:778px;line-height:26px;font-size:16.2px;color:#000;letter-spacing:0.450px;">&lt;default&gt;</span>
<span class="t" style="left:813.80px;top:778px;line-height:26px;font-size:16.2px;color:#000;letter-spacing:0.450px;">&lt;default&gt;</span>
<span class="t" style="left:965.30px;top:778px;line-height:26px;font-size:16.2px;color:#000;letter-spacing:0.227px;">Full access system role</span>
<span class="t" style="left:1160.30px;top:778px;line-height:26px;font-size:16.2px;color:#000;letter-spacing:0.685px;">Start vwd portfolio manager</span>
<span class="t" style="left:40.50px;top:804px;line-height:26px;font-size:16.2px;color:#000;letter-spacing:0.733px;">Demo</span>
<span class="t" style="left:141.90px;top:804px;line-height:26px;font-size:16.2px;color:#000;letter-spacing:0.400px;">active</span>
<span class="t" style="left:287.00px;top:804px;line-height:26px;font-size:16.2px;color:#000;letter-spacing:0.389px;">no advisor assigned</span>
<span class="t" style="left:456.80px;top:804px;line-height:26px;font-size:16.2px;color:#000;letter-spacing:0.450px;">&lt;default&gt;</span>
<span class="t" style="left:606.80px;top:804px;line-height:26px;font-size:16.2px;color:#000;letter-spacing:0.450px;">&lt;default&gt;</span>
<span class="t" style="left:813.80px;top:804px;line-height:26px;font-size:16.2px;color:#000;letter-spacing:0.450px;">&lt;default&gt;</span>
<span class="t" style="left:965.30px;top:804px;line-height:26px;font-size:16.2px;color:#000;letter-spacing:0.227px;">Full access system role</span>
<span class="t" style="left:1159.30px;top:804px;line-height:26px;font-size:16.2px;color:#000;letter-spacing:0.610px;">Use integrated browser</span>
<span class="t" style="left:40.50px;top:830px;line-height:26px;font-size:16.2px;color:#000;letter-spacing:0.733px;">Demo</span>
<span class="t" style="left:141.90px;top:830px;line-height:26px;font-size:16.2px;color:#000;letter-spacing:0.400px;">active</span>
<span class="t" style="left:287.00px;top:830px;line-height:26px;font-size:16.2px;color:#000;letter-spacing:0.389px;">no advisor assigned</span>
<span class="t" style="left:456.80px;top:830px;line-height:26px;font-size:16.2px;color:#000;letter-spacing:0.450px;">&lt;default&gt;</span>
<span class="t" style="left:606.80px;top:830px;line-height:26px;font-size:16.2px;color:#000;letter-spacing:0.450px;">&lt;default&gt;</span>
<span class="t" style="left:813.80px;top:830px;line-height:26px;font-size:16.2px;color:#000;letter-spacing:0.450px;">&lt;default&gt;</span>
<span class="t" style="left:965.30px;top:830px;line-height:26px;font-size:16.2px;color:#000;letter-spacing:0.227px;">Full access system role</span>
<span class="t" style="left:1159.30px;top:830px;line-height:26px;font-size:16.2px;color:#000;letter-spacing:0.436px;">Manage locks</span>
<span class="t" style="left:40.50px;top:856px;line-height:26px;font-size:16.2px;color:#000;letter-spacing:0.733px;">Demo</span>
<span class="t" style="left:141.90px;top:856px;line-height:26px;font-size:16.2px;color:#000;letter-spacing:0.400px;">active</span>
<span class="t" style="left:287.00px;top:856px;line-height:26px;font-size:16.2px;color:#000;letter-spacing:0.389px;">no advisor assigned</span>
<span class="t" style="left:456.80px;top:856px;line-height:26px;font-size:16.2px;color:#000;letter-spacing:0.450px;">&lt;default&gt;</span>
<span class="t" style="left:606.80px;top:856px;line-height:26px;font-size:16.2px;color:#000;letter-spacing:0.450px;">&lt;default&gt;</span>
<span class="t" style="left:813.80px;top:856px;line-height:26px;font-size:16.2px;color:#000;letter-spacing:0.450px;">&lt;default&gt;</span>
<span class="t" style="left:965.30px;top:856px;line-height:26px;font-size:16.2px;color:#000;letter-spacing:0.227px;">Full access system role</span>
<span class="t" style="left:1159.30px;top:856px;line-height:26px;font-size:16.2px;color:#000;letter-spacing:0.513px;">Record corporate actions</span>
<span class="t" style="left:40.50px;top:882px;line-height:26px;font-size:16.2px;color:#000;letter-spacing:0.733px;">Demo</span>
<span class="t" style="left:141.90px;top:882px;line-height:26px;font-size:16.2px;color:#000;letter-spacing:0.400px;">active</span>
<span class="t" style="left:287.00px;top:882px;line-height:26px;font-size:16.2px;color:#000;letter-spacing:0.389px;">no advisor assigned</span>
<span class="t" style="left:456.80px;top:882px;line-height:26px;font-size:16.2px;color:#000;letter-spacing:0.450px;">&lt;default&gt;</span>
<span class="t" style="left:606.80px;top:882px;line-height:26px;font-size:16.2px;color:#000;letter-spacing:0.450px;">&lt;default&gt;</span>
<span class="t" style="left:813.80px;top:882px;line-height:26px;font-size:16.2px;color:#000;letter-spacing:0.450px;">&lt;default&gt;</span>
<span class="t" style="left:965.30px;top:882px;line-height:26px;font-size:16.2px;color:#000;letter-spacing:0.227px;">Full access system role</span>
<span class="t" style="left:1160.30px;top:882px;line-height:26px;font-size:16.2px;color:#000;letter-spacing:0.414px;">Configure Scheduled Reporting</span>
<span class="t" style="left:40.50px;top:908px;line-height:26px;font-size:16.2px;color:#000;letter-spacing:0.733px;">Demo</span>
<span class="t" style="left:141.90px;top:908px;line-height:26px;font-size:16.2px;color:#000;letter-spacing:0.400px;">active</span>
<span class="t" style="left:287.00px;top:908px;line-height:26px;font-size:16.2px;color:#000;letter-spacing:0.389px;">no advisor assigned</span>
<span class="t" style="left:456.80px;top:908px;line-height:26px;font-size:16.2px;color:#000;letter-spacing:0.450px;">&lt;default&gt;</span>
<span class="t" style="left:606.80px;top:908px;line-height:26px;font-size:16.2px;color:#000;letter-spacing:0.450px;">&lt;default&gt;</span>
<span class="t" style="left:813.80px;top:908px;line-height:26px;font-size:16.2px;color:#000;letter-spacing:0.450px;">&lt;default&gt;</span>
<span class="t" style="left:965.30px;top:908px;line-height:26px;font-size:16.2px;color:#000;letter-spacing:0.227px;">Full access system role</span>
<span class="t" style="left:1159.30px;top:908px;line-height:26px;font-size:16.2px;color:#000;letter-spacing:0.355px;">Run Scheduled Reporting</span>
<span class="t" style="left:40.50px;top:934px;line-height:26px;font-size:16.2px;color:#000;letter-spacing:0.733px;">Demo</span>
<span class="t" style="left:141.90px;top:934px;line-height:26px;font-size:16.2px;color:#000;letter-spacing:0.400px;">active</span>
<span class="t" style="left:287.00px;top:934px;line-height:26px;font-size:16.2px;color:#000;letter-spacing:0.389px;">no advisor assigned</span>
<span class="t" style="left:456.80px;top:934px;line-height:26px;font-size:16.2px;color:#000;letter-spacing:0.450px;">&lt;default&gt;</span>
<span class="t" style="left:606.80px;top:934px;line-height:26px;font-size:16.2px;color:#000;letter-spacing:0.450px;">&lt;default&gt;</span>
<span class="t" style="left:813.80px;top:934px;line-height:26px;font-size:16.2px;color:#000;letter-spacing:0.450px;">&lt;default&gt;</span>
<span class="t" style="left:965.30px;top:934px;line-height:26px;font-size:16.2px;color:#000;letter-spacing:0.227px;">Full access system role</span>
<span class="t" style="left:1160.30px;top:934px;line-height:26px;font-size:16.2px;color:#000;letter-spacing:0.200px;">Change settings</span>
<span class="t" style="left:40.50px;top:960px;line-height:26px;font-size:16.2px;color:#000;letter-spacing:0.733px;">Demo</span>
<span class="t" style="left:141.90px;top:960px;line-height:26px;font-size:16.2px;color:#000;letter-spacing:0.400px;">active</span>
<span class="t" style="left:287.00px;top:960px;line-height:26px;font-size:16.2px;color:#000;letter-spacing:0.389px;">no advisor assigned</span>
<span class="t" style="left:456.80px;top:960px;line-height:26px;font-size:16.2px;color:#000;letter-spacing:0.450px;">&lt;default&gt;</span>
<span class="t" style="left:606.80px;top:960px;line-height:26px;font-size:16.2px;color:#000;letter-spacing:0.450px;">&lt;default&gt;</span>
<span class="t" style="left:813.80px;top:960px;line-height:26px;font-size:16.2px;color:#000;letter-spacing:0.450px;">&lt;default&gt;</span>
<span class="t" style="left:965.30px;top:960px;line-height:26px;font-size:16.2px;color:#000;letter-spacing:0.227px;">Full access system role</span>
<span class="t" style="left:1159.30px;top:960px;line-height:26px;font-size:16.2px;color:#000;letter-spacing:0.520px;">Edit settings profile</span>
<span class="t" style="left:40.50px;top:986px;line-height:26px;font-size:16.2px;color:#000;letter-spacing:0.733px;">Demo</span>
<span class="t" style="left:141.90px;top:986px;line-height:26px;font-size:16.2px;color:#000;letter-spacing:0.400px;">active</span>
<span class="t" style="left:287.00px;top:986px;line-height:26px;font-size:16.2px;color:#000;letter-spacing:0.389px;">no advisor assigned</span>
<span class="t" style="left:456.80px;top:986px;line-height:26px;font-size:16.2px;color:#000;letter-spacing:0.450px;">&lt;default&gt;</span>
<span class="t" style="left:606.80px;top:986px;line-height:26px;font-size:16.2px;color:#000;letter-spacing:0.450px;">&lt;default&gt;</span>
<span class="t" style="left:813.80px;top:986px;line-height:26px;font-size:16.2px;color:#000;letter-spacing:0.450px;">&lt;default&gt;</span>
<span class="t" style="left:965.30px;top:986px;line-height:26px;font-size:16.2px;color:#000;letter-spacing:0.227px;">Full access system role</span>
<span class="t" style="left:1160.30px;top:986px;line-height:26px;font-size:16.2px;color:#000;letter-spacing:0.483px;">Create folder</span>
</div>
</body></html>
